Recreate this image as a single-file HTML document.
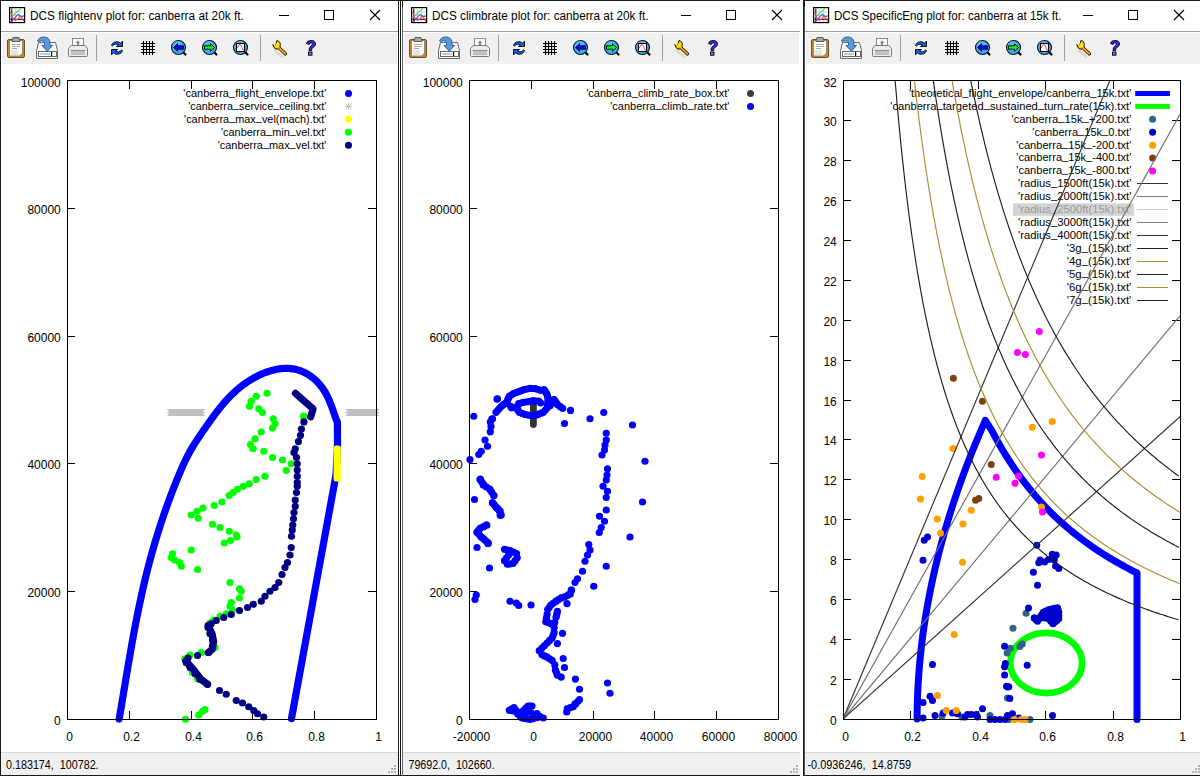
<!DOCTYPE html><html><head><meta charset="utf-8"><style>
html,body{margin:0;padding:0;background:#fff;width:1200px;height:776px;overflow:hidden;position:relative;font-family:"Liberation Sans",sans-serif;}
.a{position:absolute;}
.tt{position:absolute;top:8px;font-size:12px;color:#000;white-space:nowrap;line-height:15px;}
.st{position:absolute;top:757px;font-size:12px;color:#000;white-space:nowrap;line-height:15px;}
svg{position:absolute;left:0;top:0;}

</style></head><body>
<div class="a" style="left:2px;top:33px;width:395px;height:31px;background:#f0f0f0"></div>
<div class="a" style="left:1px;top:31px;width:397px;height:1px;background:#a0a0a0"></div>
<div class="a" style="left:1px;top:752px;width:397px;height:1px;background:#d7d7d7"></div>
<div class="a" style="left:1px;top:753px;width:397px;height:22px;background:#f0f0f0"></div>
<div class="a" style="left:404px;top:33px;width:395px;height:31px;background:#f0f0f0"></div>
<div class="a" style="left:403px;top:31px;width:397px;height:1px;background:#a0a0a0"></div>
<div class="a" style="left:403px;top:752px;width:397px;height:1px;background:#d7d7d7"></div>
<div class="a" style="left:403px;top:753px;width:397px;height:22px;background:#f0f0f0"></div>
<div class="a" style="left:806px;top:33px;width:400px;height:31px;background:#f0f0f0"></div>
<div class="a" style="left:805px;top:31px;width:400px;height:1px;background:#a0a0a0"></div>
<div class="a" style="left:805px;top:752px;width:400px;height:1px;background:#d7d7d7"></div>
<div class="a" style="left:805px;top:753px;width:400px;height:22px;background:#f0f0f0"></div>
<div class="a" style="left:0px;top:0px;width:800px;height:1px;background:#1a1a1a"></div>
<div class="a" style="left:803px;top:0px;width:397px;height:1px;background:#1a1a1a"></div>
<div class="a" style="left:0px;top:775px;width:800px;height:1px;background:#1a1a1a"></div>
<div class="a" style="left:803px;top:775px;width:397px;height:1px;background:#1a1a1a"></div>
<div class="a" style="left:0px;top:0px;width:1px;height:776px;background:#1a1a1a"></div>
<div class="a" style="left:398px;top:0px;width:1px;height:776px;background:#1a1a1a"></div>
<div class="a" style="left:400px;top:0px;width:1px;height:776px;background:#1a1a1a"></div>
<div class="a" style="left:402px;top:0px;width:1px;height:7px;background:#1a1a1a"></div>
<div class="a" style="left:402px;top:7px;width:1px;height:769px;background:#646870"></div>
<div class="a" style="left:803px;top:0px;width:1px;height:776px;background:#1a1a1a"></div>
<div class="a" style="left:804px;top:7px;width:1px;height:769px;background:#50555f"></div>
<div class="a" style="left:804px;top:0px;width:1px;height:7px;background:#1a1a1a"></div>
<svg width="1200" height="776" viewBox="0 0 1200 776" style="font-family:'Liberation Sans',sans-serif">
<text x="30.0" y="20" font-size="12" textLength="213.8" lengthAdjust="spacingAndGlyphs">DCS flightenv plot for: canberra at 20k ft.</text>
<text x="6.0" y="769" font-size="12" textLength="92.6" lengthAdjust="spacingAndGlyphs" xml:space="preserve">0.183174,  100782.</text>
<text x="432.0" y="20" font-size="12" textLength="216.5" lengthAdjust="spacingAndGlyphs">DCS climbrate plot for: canberra at 20k ft.</text>
<text x="408.5" y="769" font-size="12" textLength="86.0" lengthAdjust="spacingAndGlyphs" xml:space="preserve">79692.0,  102660.</text>
<text x="834.0" y="20" font-size="12" textLength="227.5" lengthAdjust="spacingAndGlyphs">DCS SpecificEng plot for: canberra at 15k ft.</text>
<text x="807.5" y="769" font-size="12" textLength="103.5" lengthAdjust="spacingAndGlyphs" xml:space="preserve">-0.0936246,  14.8759</text>
<rect x="279" y="15" width="10" height="1" fill="#000"/>
<rect x="324.5" y="10.5" width="9" height="9" fill="none" stroke="#000" stroke-width="1"/>
<path d="M370.0 10 L380.0 20 M380.0 10 L370.0 20" stroke="#000" stroke-width="1.1"/>
<rect x="394" y="765" width="2" height="2" fill="#b4b4b4"/>
<rect x="391" y="768" width="2" height="2" fill="#b4b4b4"/>
<rect x="394" y="768" width="2" height="2" fill="#b4b4b4"/>
<rect x="388" y="771" width="2" height="2" fill="#b4b4b4"/>
<rect x="391" y="771" width="2" height="2" fill="#b4b4b4"/>
<rect x="394" y="771" width="2" height="2" fill="#b4b4b4"/>
<rect x="96" y="35" width="1" height="26" fill="#a0a0a0"/>
<rect x="260" y="35" width="1" height="26" fill="#a0a0a0"/>
<rect x="681" y="15" width="10" height="1" fill="#000"/>
<rect x="726.5" y="10.5" width="9" height="9" fill="none" stroke="#000" stroke-width="1"/>
<path d="M772.0 10 L782.0 20 M782.0 10 L772.0 20" stroke="#000" stroke-width="1.1"/>
<rect x="796" y="765" width="2" height="2" fill="#b4b4b4"/>
<rect x="793" y="768" width="2" height="2" fill="#b4b4b4"/>
<rect x="796" y="768" width="2" height="2" fill="#b4b4b4"/>
<rect x="790" y="771" width="2" height="2" fill="#b4b4b4"/>
<rect x="793" y="771" width="2" height="2" fill="#b4b4b4"/>
<rect x="796" y="771" width="2" height="2" fill="#b4b4b4"/>
<rect x="498" y="35" width="1" height="26" fill="#a0a0a0"/>
<rect x="662" y="35" width="1" height="26" fill="#a0a0a0"/>
<rect x="1083" y="15" width="10" height="1" fill="#000"/>
<rect x="1128.5" y="10.5" width="9" height="9" fill="none" stroke="#000" stroke-width="1"/>
<path d="M1174.0 10 L1184.0 20 M1184.0 10 L1174.0 20" stroke="#000" stroke-width="1.1"/>
<rect x="1198" y="765" width="2" height="2" fill="#b4b4b4"/>
<rect x="1195" y="768" width="2" height="2" fill="#b4b4b4"/>
<rect x="1198" y="768" width="2" height="2" fill="#b4b4b4"/>
<rect x="1192" y="771" width="2" height="2" fill="#b4b4b4"/>
<rect x="1195" y="771" width="2" height="2" fill="#b4b4b4"/>
<rect x="1198" y="771" width="2" height="2" fill="#b4b4b4"/>
<rect x="900" y="35" width="1" height="26" fill="#a0a0a0"/>
<rect x="1064" y="35" width="1" height="26" fill="#a0a0a0"/>
<g transform="translate(0,0)"><rect x="7.5" y="39.5" width="17" height="18" rx="1.5" fill="#c98a2b" stroke="#7a4d12" stroke-width="1"/><path d="M9.5 40.5 H22.5 V53 L19.5 56 H9.5 Z" fill="#fdfdfd" stroke="#707a80" stroke-width="0.8"/><path d="M12 40.5 L13 37.5 H19 L20 40.5 V41.5 H12 Z" fill="#a8a898" stroke="#505050" stroke-width="0.9"/><path d="M12 44.5 H20 M12 46.5 H20 M12 48.5 H17" stroke="#909090" stroke-width="0.8"/><path d="M11 50 H18 V55 H11 Z" fill="#e6e6e0"/><path d="M38.5 42.5 H55.5 L57.5 50.5 V58.5 H36.5 V50.5 Z" fill="#f6f6f6" stroke="#6a6a6a" stroke-width="1"/><rect x="38.5" y="51.5" width="18" height="5" fill="#fff" stroke="#6a6a6a" stroke-width="1"/><rect x="40" y="53" width="10" height="2" fill="#c8c8c8"/><rect x="51" y="52" width="1.2" height="4" fill="#000"/><path d="M37.5 41 C38.5 38 41 37 44 37 C47.5 37 49.5 39 50 42 V45.5 H52.5 L47.4 51.2 L42 45.5 H44.5 V43 C44 41 42 40 39.5 41.5 Z" fill="#5b9bd5" stroke="#1f5a96" stroke-width="0.9"/><rect x="72.5" y="38.5" width="11" height="9" fill="#fafafa" stroke="#8a8a8a" stroke-width="1"/><path d="M78 40.5 L75.5 43 H77 V46 H79 V43 H80.5 Z" fill="#8a8a8a"/><path d="M71 45.5 H85 L87.5 48.5 V55.5 Q87.5 56.5 86.5 56.5 H69.5 Q68.5 56.5 68.5 55.5 V48.5 Z" fill="#ececec" stroke="#7a7a7a" stroke-width="1"/><path d="M70.5 50.5 H85.5 M71 54 H85" stroke="#8a8a8a" stroke-width="1"/><rect x="71" y="51" width="14" height="2.5" fill="#c4c4c4"/><path d="M111.5 45.5 C112.5 41.5 118 40.5 121 43.5 L122.5 41 V46.5 H116.5 L118.5 45 C116.5 43.5 114 44 112.5 46 Z" fill="#1060ff" stroke="#000" stroke-width="0.9"/><path d="M122.5 50.5 C121.5 54.5 116 55.5 113 52.5 L111.5 55 V49.5 H117.5 L115.5 51 C117.5 52.5 120 52 121.5 50 Z" fill="#1060ff" stroke="#000" stroke-width="0.9"/><path d="M143.5 41 V55 M146.5 41 V55 M149.5 41 V55 M152.5 41 V55 M141 43.5 H155 M141 46.5 H155 M141 49.5 H155 M141 52.5 H155" stroke="#000" stroke-width="1.1"/><circle cx="178.5" cy="47.5" r="7" fill="#3aa8f5" stroke="#101010" stroke-width="1.1"/><circle cx="177.5" cy="46.0" r="5" fill="#70c8ff" opacity="0.5"/><path d="M184.0 53.0 L185.5 54.5" stroke="#000" stroke-width="2.2" stroke-linecap="round"/><path d="M173.5 47.5 L177.5 43.8 V45.8 H183.5 V49.2 H177.5 V51.2 Z" fill="#0000ff" stroke="#000" stroke-width="0.9"/><circle cx="209.5" cy="47.5" r="7" fill="#3aa8f5" stroke="#101010" stroke-width="1.1"/><circle cx="208.5" cy="46.0" r="5" fill="#70c8ff" opacity="0.5"/><path d="M215.0 53.0 L216.5 54.5" stroke="#000" stroke-width="2.2" stroke-linecap="round"/><path d="M214.5 47.5 L210.5 43.8 V45.8 H204.5 V49.2 H210.5 V51.2 Z" fill="#00ff00" stroke="#000" stroke-width="0.9"/><circle cx="240.5" cy="47.5" r="7" fill="#3aa8f5" stroke="#101010" stroke-width="1.1"/><circle cx="239.5" cy="46.0" r="5" fill="#70c8ff" opacity="0.5"/><path d="M246.0 53.0 L247.5 54.5" stroke="#000" stroke-width="2.2" stroke-linecap="round"/><rect x="236.5" y="43.5" width="8" height="8" fill="#fff" stroke="#000" stroke-width="1.1"/><path d="M237 48 C238.5 46.5 238.5 44.5 240 44.5 C241.5 44.5 242 50 244 50.5" fill="none" stroke="#ff0000" stroke-width="0.8"/><path d="M274 50 L283 57.5" stroke="#b8b0a0" stroke-width="2.5" opacity="0.35"/><path d="M272.8 44.5 L274.3 46.2 L275.6 45.3 L276.2 43.5 L276.9 40.5 Q280.6 41.5 280.3 44.8 L279.9 47 L286.6 53 Q287.2 55.2 285 55.3 L278.3 49 Q275.8 49.8 274 47.6 Z" fill="#ffa000" stroke="#000" stroke-width="0.9" stroke-linejoin="round"/><path d="M273.6 44.9 L274.4 45.6 L276 44.6 L277.4 41.4 Q279.8 42.4 279.5 44.8 L279.1 46.8 Q276.5 48.6 274.6 47.1 Z" fill="#ffe600"/><path d="M306.5 43.5 Q307 40.5 311 40.5 Q315.5 40.5 315.5 44 Q315.5 46 313 47.5 Q311.5 48.5 311.5 50.5 H309 Q308.8 47.5 311 46 Q312.5 45 312.5 44 Q312.5 42.8 311 42.8 Q309.5 42.8 309.2 44.5 Z" fill="#3030f0" stroke="#000" stroke-width="0.9"/><rect x="308.5" y="52" width="3.5" height="3.2" fill="#7070f8" stroke="#000" stroke-width="0.9"/><rect x="9.6" y="7.6" width="15" height="15" fill="#fff" stroke="#000" stroke-width="1.2"/><path d="M10.5 12 H24 M10.5 15.5 H24 M15.5 8.5 V22 M19.5 8.5 V22" stroke="#cccccc" stroke-width="0.8"/><path d="M11.8 8.5 V22 M10.3 19.3 H24" stroke="#000" stroke-width="1"/><path d="M10.6 17.3 L12 16.5 L21 8.3" fill="none" stroke="#22ee55" stroke-width="1.1"/><path d="M10.8 22 L14 19 L17.3 15 Q18.3 14 19.3 15 L21 16.6 Q22 17 23.8 15.6" fill="none" stroke="#4040ff" stroke-width="1.1"/><path d="M10.4 12 L12.4 16.5 L14 19.5 Q15.7 21 17.5 19 L19 17 Q20 16 21.3 17.5 L23.8 21.4" fill="none" stroke="#ff4444" stroke-width="1.1"/></g>
<g transform="translate(402,0)"><rect x="7.5" y="39.5" width="17" height="18" rx="1.5" fill="#c98a2b" stroke="#7a4d12" stroke-width="1"/><path d="M9.5 40.5 H22.5 V53 L19.5 56 H9.5 Z" fill="#fdfdfd" stroke="#707a80" stroke-width="0.8"/><path d="M12 40.5 L13 37.5 H19 L20 40.5 V41.5 H12 Z" fill="#a8a898" stroke="#505050" stroke-width="0.9"/><path d="M12 44.5 H20 M12 46.5 H20 M12 48.5 H17" stroke="#909090" stroke-width="0.8"/><path d="M11 50 H18 V55 H11 Z" fill="#e6e6e0"/><path d="M38.5 42.5 H55.5 L57.5 50.5 V58.5 H36.5 V50.5 Z" fill="#f6f6f6" stroke="#6a6a6a" stroke-width="1"/><rect x="38.5" y="51.5" width="18" height="5" fill="#fff" stroke="#6a6a6a" stroke-width="1"/><rect x="40" y="53" width="10" height="2" fill="#c8c8c8"/><rect x="51" y="52" width="1.2" height="4" fill="#000"/><path d="M37.5 41 C38.5 38 41 37 44 37 C47.5 37 49.5 39 50 42 V45.5 H52.5 L47.4 51.2 L42 45.5 H44.5 V43 C44 41 42 40 39.5 41.5 Z" fill="#5b9bd5" stroke="#1f5a96" stroke-width="0.9"/><rect x="72.5" y="38.5" width="11" height="9" fill="#fafafa" stroke="#8a8a8a" stroke-width="1"/><path d="M78 40.5 L75.5 43 H77 V46 H79 V43 H80.5 Z" fill="#8a8a8a"/><path d="M71 45.5 H85 L87.5 48.5 V55.5 Q87.5 56.5 86.5 56.5 H69.5 Q68.5 56.5 68.5 55.5 V48.5 Z" fill="#ececec" stroke="#7a7a7a" stroke-width="1"/><path d="M70.5 50.5 H85.5 M71 54 H85" stroke="#8a8a8a" stroke-width="1"/><rect x="71" y="51" width="14" height="2.5" fill="#c4c4c4"/><path d="M111.5 45.5 C112.5 41.5 118 40.5 121 43.5 L122.5 41 V46.5 H116.5 L118.5 45 C116.5 43.5 114 44 112.5 46 Z" fill="#1060ff" stroke="#000" stroke-width="0.9"/><path d="M122.5 50.5 C121.5 54.5 116 55.5 113 52.5 L111.5 55 V49.5 H117.5 L115.5 51 C117.5 52.5 120 52 121.5 50 Z" fill="#1060ff" stroke="#000" stroke-width="0.9"/><path d="M143.5 41 V55 M146.5 41 V55 M149.5 41 V55 M152.5 41 V55 M141 43.5 H155 M141 46.5 H155 M141 49.5 H155 M141 52.5 H155" stroke="#000" stroke-width="1.1"/><circle cx="178.5" cy="47.5" r="7" fill="#3aa8f5" stroke="#101010" stroke-width="1.1"/><circle cx="177.5" cy="46.0" r="5" fill="#70c8ff" opacity="0.5"/><path d="M184.0 53.0 L185.5 54.5" stroke="#000" stroke-width="2.2" stroke-linecap="round"/><path d="M173.5 47.5 L177.5 43.8 V45.8 H183.5 V49.2 H177.5 V51.2 Z" fill="#0000ff" stroke="#000" stroke-width="0.9"/><circle cx="209.5" cy="47.5" r="7" fill="#3aa8f5" stroke="#101010" stroke-width="1.1"/><circle cx="208.5" cy="46.0" r="5" fill="#70c8ff" opacity="0.5"/><path d="M215.0 53.0 L216.5 54.5" stroke="#000" stroke-width="2.2" stroke-linecap="round"/><path d="M214.5 47.5 L210.5 43.8 V45.8 H204.5 V49.2 H210.5 V51.2 Z" fill="#00ff00" stroke="#000" stroke-width="0.9"/><circle cx="240.5" cy="47.5" r="7" fill="#3aa8f5" stroke="#101010" stroke-width="1.1"/><circle cx="239.5" cy="46.0" r="5" fill="#70c8ff" opacity="0.5"/><path d="M246.0 53.0 L247.5 54.5" stroke="#000" stroke-width="2.2" stroke-linecap="round"/><rect x="236.5" y="43.5" width="8" height="8" fill="#fff" stroke="#000" stroke-width="1.1"/><path d="M237 48 C238.5 46.5 238.5 44.5 240 44.5 C241.5 44.5 242 50 244 50.5" fill="none" stroke="#ff0000" stroke-width="0.8"/><path d="M274 50 L283 57.5" stroke="#b8b0a0" stroke-width="2.5" opacity="0.35"/><path d="M272.8 44.5 L274.3 46.2 L275.6 45.3 L276.2 43.5 L276.9 40.5 Q280.6 41.5 280.3 44.8 L279.9 47 L286.6 53 Q287.2 55.2 285 55.3 L278.3 49 Q275.8 49.8 274 47.6 Z" fill="#ffa000" stroke="#000" stroke-width="0.9" stroke-linejoin="round"/><path d="M273.6 44.9 L274.4 45.6 L276 44.6 L277.4 41.4 Q279.8 42.4 279.5 44.8 L279.1 46.8 Q276.5 48.6 274.6 47.1 Z" fill="#ffe600"/><path d="M306.5 43.5 Q307 40.5 311 40.5 Q315.5 40.5 315.5 44 Q315.5 46 313 47.5 Q311.5 48.5 311.5 50.5 H309 Q308.8 47.5 311 46 Q312.5 45 312.5 44 Q312.5 42.8 311 42.8 Q309.5 42.8 309.2 44.5 Z" fill="#3030f0" stroke="#000" stroke-width="0.9"/><rect x="308.5" y="52" width="3.5" height="3.2" fill="#7070f8" stroke="#000" stroke-width="0.9"/><rect x="9.6" y="7.6" width="15" height="15" fill="#fff" stroke="#000" stroke-width="1.2"/><path d="M10.5 12 H24 M10.5 15.5 H24 M15.5 8.5 V22 M19.5 8.5 V22" stroke="#cccccc" stroke-width="0.8"/><path d="M11.8 8.5 V22 M10.3 19.3 H24" stroke="#000" stroke-width="1"/><path d="M10.6 17.3 L12 16.5 L21 8.3" fill="none" stroke="#22ee55" stroke-width="1.1"/><path d="M10.8 22 L14 19 L17.3 15 Q18.3 14 19.3 15 L21 16.6 Q22 17 23.8 15.6" fill="none" stroke="#4040ff" stroke-width="1.1"/><path d="M10.4 12 L12.4 16.5 L14 19.5 Q15.7 21 17.5 19 L19 17 Q20 16 21.3 17.5 L23.8 21.4" fill="none" stroke="#ff4444" stroke-width="1.1"/></g>
<g transform="translate(804,0)"><rect x="7.5" y="39.5" width="17" height="18" rx="1.5" fill="#c98a2b" stroke="#7a4d12" stroke-width="1"/><path d="M9.5 40.5 H22.5 V53 L19.5 56 H9.5 Z" fill="#fdfdfd" stroke="#707a80" stroke-width="0.8"/><path d="M12 40.5 L13 37.5 H19 L20 40.5 V41.5 H12 Z" fill="#a8a898" stroke="#505050" stroke-width="0.9"/><path d="M12 44.5 H20 M12 46.5 H20 M12 48.5 H17" stroke="#909090" stroke-width="0.8"/><path d="M11 50 H18 V55 H11 Z" fill="#e6e6e0"/><path d="M38.5 42.5 H55.5 L57.5 50.5 V58.5 H36.5 V50.5 Z" fill="#f6f6f6" stroke="#6a6a6a" stroke-width="1"/><rect x="38.5" y="51.5" width="18" height="5" fill="#fff" stroke="#6a6a6a" stroke-width="1"/><rect x="40" y="53" width="10" height="2" fill="#c8c8c8"/><rect x="51" y="52" width="1.2" height="4" fill="#000"/><path d="M37.5 41 C38.5 38 41 37 44 37 C47.5 37 49.5 39 50 42 V45.5 H52.5 L47.4 51.2 L42 45.5 H44.5 V43 C44 41 42 40 39.5 41.5 Z" fill="#5b9bd5" stroke="#1f5a96" stroke-width="0.9"/><rect x="72.5" y="38.5" width="11" height="9" fill="#fafafa" stroke="#8a8a8a" stroke-width="1"/><path d="M78 40.5 L75.5 43 H77 V46 H79 V43 H80.5 Z" fill="#8a8a8a"/><path d="M71 45.5 H85 L87.5 48.5 V55.5 Q87.5 56.5 86.5 56.5 H69.5 Q68.5 56.5 68.5 55.5 V48.5 Z" fill="#ececec" stroke="#7a7a7a" stroke-width="1"/><path d="M70.5 50.5 H85.5 M71 54 H85" stroke="#8a8a8a" stroke-width="1"/><rect x="71" y="51" width="14" height="2.5" fill="#c4c4c4"/><path d="M111.5 45.5 C112.5 41.5 118 40.5 121 43.5 L122.5 41 V46.5 H116.5 L118.5 45 C116.5 43.5 114 44 112.5 46 Z" fill="#1060ff" stroke="#000" stroke-width="0.9"/><path d="M122.5 50.5 C121.5 54.5 116 55.5 113 52.5 L111.5 55 V49.5 H117.5 L115.5 51 C117.5 52.5 120 52 121.5 50 Z" fill="#1060ff" stroke="#000" stroke-width="0.9"/><path d="M143.5 41 V55 M146.5 41 V55 M149.5 41 V55 M152.5 41 V55 M141 43.5 H155 M141 46.5 H155 M141 49.5 H155 M141 52.5 H155" stroke="#000" stroke-width="1.1"/><circle cx="178.5" cy="47.5" r="7" fill="#3aa8f5" stroke="#101010" stroke-width="1.1"/><circle cx="177.5" cy="46.0" r="5" fill="#70c8ff" opacity="0.5"/><path d="M184.0 53.0 L185.5 54.5" stroke="#000" stroke-width="2.2" stroke-linecap="round"/><path d="M173.5 47.5 L177.5 43.8 V45.8 H183.5 V49.2 H177.5 V51.2 Z" fill="#0000ff" stroke="#000" stroke-width="0.9"/><circle cx="209.5" cy="47.5" r="7" fill="#3aa8f5" stroke="#101010" stroke-width="1.1"/><circle cx="208.5" cy="46.0" r="5" fill="#70c8ff" opacity="0.5"/><path d="M215.0 53.0 L216.5 54.5" stroke="#000" stroke-width="2.2" stroke-linecap="round"/><path d="M214.5 47.5 L210.5 43.8 V45.8 H204.5 V49.2 H210.5 V51.2 Z" fill="#00ff00" stroke="#000" stroke-width="0.9"/><circle cx="240.5" cy="47.5" r="7" fill="#3aa8f5" stroke="#101010" stroke-width="1.1"/><circle cx="239.5" cy="46.0" r="5" fill="#70c8ff" opacity="0.5"/><path d="M246.0 53.0 L247.5 54.5" stroke="#000" stroke-width="2.2" stroke-linecap="round"/><rect x="236.5" y="43.5" width="8" height="8" fill="#fff" stroke="#000" stroke-width="1.1"/><path d="M237 48 C238.5 46.5 238.5 44.5 240 44.5 C241.5 44.5 242 50 244 50.5" fill="none" stroke="#ff0000" stroke-width="0.8"/><path d="M274 50 L283 57.5" stroke="#b8b0a0" stroke-width="2.5" opacity="0.35"/><path d="M272.8 44.5 L274.3 46.2 L275.6 45.3 L276.2 43.5 L276.9 40.5 Q280.6 41.5 280.3 44.8 L279.9 47 L286.6 53 Q287.2 55.2 285 55.3 L278.3 49 Q275.8 49.8 274 47.6 Z" fill="#ffa000" stroke="#000" stroke-width="0.9" stroke-linejoin="round"/><path d="M273.6 44.9 L274.4 45.6 L276 44.6 L277.4 41.4 Q279.8 42.4 279.5 44.8 L279.1 46.8 Q276.5 48.6 274.6 47.1 Z" fill="#ffe600"/><path d="M306.5 43.5 Q307 40.5 311 40.5 Q315.5 40.5 315.5 44 Q315.5 46 313 47.5 Q311.5 48.5 311.5 50.5 H309 Q308.8 47.5 311 46 Q312.5 45 312.5 44 Q312.5 42.8 311 42.8 Q309.5 42.8 309.2 44.5 Z" fill="#3030f0" stroke="#000" stroke-width="0.9"/><rect x="308.5" y="52" width="3.5" height="3.2" fill="#7070f8" stroke="#000" stroke-width="0.9"/><rect x="9.6" y="7.6" width="15" height="15" fill="#fff" stroke="#000" stroke-width="1.2"/><path d="M10.5 12 H24 M10.5 15.5 H24 M15.5 8.5 V22 M19.5 8.5 V22" stroke="#cccccc" stroke-width="0.8"/><path d="M11.8 8.5 V22 M10.3 19.3 H24" stroke="#000" stroke-width="1"/><path d="M10.6 17.3 L12 16.5 L21 8.3" fill="none" stroke="#22ee55" stroke-width="1.1"/><path d="M10.8 22 L14 19 L17.3 15 Q18.3 14 19.3 15 L21 16.6 Q22 17 23.8 15.6" fill="none" stroke="#4040ff" stroke-width="1.1"/><path d="M10.4 12 L12.4 16.5 L14 19.5 Q15.7 21 17.5 19 L19 17 Q20 16 21.3 17.5 L23.8 21.4" fill="none" stroke="#ff4444" stroke-width="1.1"/></g>
<path d="M67.5 719 V711 M67.5 81 V89" stroke="#000"/>
<text x="69.5" y="741" font-size="12" text-anchor="middle">0</text>
<path d="M129.5 719 V711 M129.5 81 V89" stroke="#000"/>
<text x="131.5" y="741" font-size="12" text-anchor="middle">0.2</text>
<path d="M191.5 719 V711 M191.5 81 V89" stroke="#000"/>
<text x="193.5" y="741" font-size="12" text-anchor="middle">0.4</text>
<path d="M252.5 719 V711 M252.5 81 V89" stroke="#000"/>
<text x="254.5" y="741" font-size="12" text-anchor="middle">0.6</text>
<path d="M314.5 719 V711 M314.5 81 V89" stroke="#000"/>
<text x="316.5" y="741" font-size="12" text-anchor="middle">0.8</text>
<path d="M376.5 719 V711 M376.5 81 V89" stroke="#000"/>
<text x="378.5" y="741" font-size="12" text-anchor="middle">1</text>
<path d="M67 719.5 H75 M377 719.5 H368" stroke="#000"/>
<text x="60.8" y="724.7" font-size="12" text-anchor="end">0</text>
<path d="M67 591.5 H75 M377 591.5 H368" stroke="#000"/>
<text x="60.8" y="596.7" font-size="12" text-anchor="end">20000</text>
<path d="M67 463.5 H75 M377 463.5 H368" stroke="#000"/>
<text x="60.8" y="468.7" font-size="12" text-anchor="end">40000</text>
<path d="M67 336.5 H75 M377 336.5 H368" stroke="#000"/>
<text x="60.8" y="341.7" font-size="12" text-anchor="end">60000</text>
<path d="M67 208.5 H75 M377 208.5 H368" stroke="#000"/>
<text x="60.8" y="213.7" font-size="12" text-anchor="end">80000</text>
<path d="M67 80.5 H75 M377 80.5 H368" stroke="#000"/>
<text x="60.8" y="86.5" font-size="12" text-anchor="end">100000</text>
<path d="M469.5 719 V711 M469.5 81 V89" stroke="#000"/>
<text x="471.5" y="741" font-size="12" text-anchor="middle">-20000</text>
<path d="M531.5 719 V711 M531.5 81 V89" stroke="#000"/>
<text x="533.5" y="741" font-size="12" text-anchor="middle">0</text>
<path d="M593.5 719 V711 M593.5 81 V89" stroke="#000"/>
<text x="595.5" y="741" font-size="12" text-anchor="middle">20000</text>
<path d="M654.5 719 V711 M654.5 81 V89" stroke="#000"/>
<text x="656.5" y="741" font-size="12" text-anchor="middle">40000</text>
<path d="M716.5 719 V711 M716.5 81 V89" stroke="#000"/>
<text x="718.5" y="741" font-size="12" text-anchor="middle">60000</text>
<path d="M778.5 719 V711 M778.5 81 V89" stroke="#000"/>
<text x="780.5" y="741" font-size="12" text-anchor="middle">80000</text>
<path d="M469 719.5 H477 M779 719.5 H770" stroke="#000"/>
<text x="462.8" y="724.7" font-size="12" text-anchor="end">0</text>
<path d="M469 591.5 H477 M779 591.5 H770" stroke="#000"/>
<text x="462.8" y="596.7" font-size="12" text-anchor="end">20000</text>
<path d="M469 463.5 H477 M779 463.5 H770" stroke="#000"/>
<text x="462.8" y="468.7" font-size="12" text-anchor="end">40000</text>
<path d="M469 336.5 H477 M779 336.5 H770" stroke="#000"/>
<text x="462.8" y="341.7" font-size="12" text-anchor="end">60000</text>
<path d="M469 208.5 H477 M779 208.5 H770" stroke="#000"/>
<text x="462.8" y="213.7" font-size="12" text-anchor="end">80000</text>
<path d="M469 80.5 H477 M779 80.5 H770" stroke="#000"/>
<text x="462.8" y="86.5" font-size="12" text-anchor="end">100000</text>
<path d="M843.5 719 V711 M843.5 81 V89" stroke="#000"/>
<text x="845.5" y="741" font-size="12" text-anchor="middle">0</text>
<path d="M910.5 719 V711 M910.5 81 V89" stroke="#000"/>
<text x="912.5" y="741" font-size="12" text-anchor="middle">0.2</text>
<path d="M978.5 719 V711 M978.5 81 V89" stroke="#000"/>
<text x="980.5" y="741" font-size="12" text-anchor="middle">0.4</text>
<path d="M1045.5 719 V711 M1045.5 81 V89" stroke="#000"/>
<text x="1047.5" y="741" font-size="12" text-anchor="middle">0.6</text>
<path d="M1113.5 719 V711 M1113.5 81 V89" stroke="#000"/>
<text x="1115.5" y="741" font-size="12" text-anchor="middle">0.8</text>
<path d="M1180.5 719 V711 M1180.5 81 V89" stroke="#000"/>
<text x="1182.5" y="741" font-size="12" text-anchor="middle">1</text>
<path d="M843 719.5 H851 M1181 719.5 H1172" stroke="#000"/>
<text x="836.8" y="724.7" font-size="12" text-anchor="end">0</text>
<path d="M843 679.5 H851 M1181 679.5 H1172" stroke="#000"/>
<text x="836.8" y="684.7" font-size="12" text-anchor="end">2</text>
<path d="M843 639.5 H851 M1181 639.5 H1172" stroke="#000"/>
<text x="836.8" y="644.7" font-size="12" text-anchor="end">4</text>
<path d="M843 599.5 H851 M1181 599.5 H1172" stroke="#000"/>
<text x="836.8" y="604.7" font-size="12" text-anchor="end">6</text>
<path d="M843 559.5 H851 M1181 559.5 H1172" stroke="#000"/>
<text x="836.8" y="564.7" font-size="12" text-anchor="end">8</text>
<path d="M843 519.5 H851 M1181 519.5 H1172" stroke="#000"/>
<text x="836.8" y="524.7" font-size="12" text-anchor="end">10</text>
<path d="M843 479.5 H851 M1181 479.5 H1172" stroke="#000"/>
<text x="836.8" y="484.7" font-size="12" text-anchor="end">12</text>
<path d="M843 439.5 H851 M1181 439.5 H1172" stroke="#000"/>
<text x="836.8" y="444.7" font-size="12" text-anchor="end">14</text>
<path d="M843 400.5 H851 M1181 400.5 H1172" stroke="#000"/>
<text x="836.8" y="405.7" font-size="12" text-anchor="end">16</text>
<path d="M843 360.5 H851 M1181 360.5 H1172" stroke="#000"/>
<text x="836.8" y="365.7" font-size="12" text-anchor="end">18</text>
<path d="M843 320.5 H851 M1181 320.5 H1172" stroke="#000"/>
<text x="836.8" y="325.7" font-size="12" text-anchor="end">20</text>
<path d="M843 280.5 H851 M1181 280.5 H1172" stroke="#000"/>
<text x="836.8" y="285.7" font-size="12" text-anchor="end">22</text>
<path d="M843 240.5 H851 M1181 240.5 H1172" stroke="#000"/>
<text x="836.8" y="245.7" font-size="12" text-anchor="end">24</text>
<path d="M843 200.5 H851 M1181 200.5 H1172" stroke="#000"/>
<text x="836.8" y="205.7" font-size="12" text-anchor="end">26</text>
<path d="M843 160.5 H851 M1181 160.5 H1172" stroke="#000"/>
<text x="836.8" y="165.7" font-size="12" text-anchor="end">28</text>
<path d="M843 120.5 H851 M1181 120.5 H1172" stroke="#000"/>
<text x="836.8" y="125.7" font-size="12" text-anchor="end">30</text>
<path d="M843 80.5 H851 M1181 80.5 H1172" stroke="#000"/>
<text x="836.8" y="86.5" font-size="12" text-anchor="end">32</text>
<g><path d="M166.9 409 H205.2 L202.7 411.6 L205.2 412.1 V412.9 L202.7 413.4 L205.2 416 H166.9 L169.4 413.4 L166.9 412.9 V412.1 L169.4 411.6 Z" fill="#c0c0c0"/><path d="M345.2 409 H379.5 L377.0 411.6 L379.5 412.1 V412.9 L377.0 413.4 L379.5 416 H345.2 L347.8 413.4 L345.2 412.9 V412.1 L347.8 411.6 Z" fill="#c0c0c0"/><path d="M119.16 719.01 L119.51 716.99 L119.85 714.96 L120.20 712.93 L120.54 710.90 L120.88 708.87 L121.23 706.84 L121.57 704.81 L121.91 702.78 L122.25 700.75 L122.59 698.72 L122.93 696.69 L123.27 694.66 L123.60 692.63 L123.94 690.60 L124.28 688.57 L124.62 686.54 L124.96 684.51 L125.30 682.48 L125.63 680.45 L125.97 678.42 L126.31 676.40 L126.65 674.37 L126.99 672.34 L127.34 670.31 L127.68 668.28 L128.02 666.26 L128.37 664.23 L128.71 662.20 L129.06 660.18 L129.41 658.15 L129.76 656.13 L130.11 654.10 L130.46 652.08 L130.82 650.05 L131.17 648.03 L131.53 646.00 L131.89 643.98 L132.26 641.96 L132.62 639.94 L132.99 637.92 L133.36 635.90 L133.73 633.88 L134.10 631.86 L134.48 629.84 L134.86 627.82 L135.25 625.80 L135.63 623.78 L136.02 621.77 L136.41 619.75 L136.81 617.74 L137.21 615.72 L137.61 613.71 L138.01 611.70 L138.42 609.69 L138.84 607.67 L139.25 605.66 L139.67 603.65 L140.10 601.65 L140.53 599.64 L140.96 597.63 L141.40 595.62 L141.84 593.62 L142.29 591.62 L142.74 589.61 L143.19 587.61 L143.65 585.61 L144.12 583.61 L144.59 581.61 L145.06 579.61 L145.54 577.61 L146.03 575.62 L146.52 573.62 L147.02 571.63 L147.52 569.64 L148.03 567.64 L148.54 565.65 L149.06 563.66 L149.58 561.68 L150.12 559.69 L150.65 557.70 L151.20 555.72 L151.74 553.74 L152.30 551.76 L152.86 549.78 L153.43 547.80 L154.00 545.82 L154.58 543.84 L155.16 541.87 L155.75 539.90 L156.35 537.93 L156.95 535.96 L157.56 533.99 L158.17 532.03 L158.79 530.06 L159.41 528.10 L160.05 526.14 L160.68 524.18 L161.33 522.23 L161.97 520.28 L162.63 518.33 L163.29 516.38 L163.96 514.43 L164.63 512.49 L165.30 510.54 L165.99 508.60 L166.68 506.67 L167.37 504.73 L168.07 502.80 L168.78 500.87 L169.49 498.94 L170.21 497.02 L170.94 495.10 L171.67 493.18 L172.40 491.26 L173.14 489.35 L173.89 487.43 L174.64 485.53 L175.40 483.62 L176.17 481.72 L176.94 479.82 L177.72 477.92 L178.50 476.03 L179.28 474.14 L180.08 472.25 L180.88 470.37 L181.69 468.49 L182.51 466.62 L183.35 464.76 L184.20 462.90 L185.07 461.04 L185.95 459.20 L186.86 457.36 L187.78 455.54 L188.73 453.72 L189.71 451.92 L190.72 450.13 L191.75 448.35 L192.80 446.58 L193.88 444.82 L194.98 443.07 L196.10 441.33 L197.23 439.60 L198.38 437.88 L199.53 436.16 L200.70 434.46 L201.88 432.76 L203.05 431.06 L204.24 429.38 L205.42 427.69 L206.60 426.02 L207.78 424.35 L208.96 422.68 L210.14 421.02 L211.32 419.37 L212.51 417.73 L213.70 416.09 L214.90 414.47 L216.12 412.85 L217.34 411.25 L218.57 409.66 L219.81 408.08 L221.07 406.52 L222.35 404.97 L223.64 403.44 L224.96 401.92 L226.29 400.42 L227.65 398.93 L229.02 397.47 L230.43 396.02 L231.85 394.59 L233.31 393.19 L234.80 391.80 L236.31 390.44 L237.86 389.10 L239.44 387.78 L241.05 386.49 L242.70 385.22 L244.39 383.98 L246.12 382.77 L247.88 381.58 L249.67 380.43 L251.49 379.32 L253.34 378.24 L255.22 377.20 L257.12 376.21 L259.04 375.26 L260.98 374.37 L262.93 373.52 L264.91 372.73 L266.89 372.00 L268.88 371.32 L270.88 370.71 L272.89 370.16 L274.90 369.68 L276.92 369.27 L278.93 368.93 L280.94 368.67 L282.94 368.48 L284.94 368.38 L286.92 368.36 L288.90 368.42 L290.86 368.58 L292.80 368.82 L294.73 369.16 L296.63 369.60 L298.52 370.13 L300.37 370.76 L302.20 371.48 L304.00 372.28 L305.76 373.17 L307.49 374.15 L309.19 375.21 L310.84 376.34 L312.45 377.55 L314.02 378.83 L315.54 380.18 L317.01 381.60 L318.42 383.09 L319.79 384.63 L321.09 386.24 L322.34 387.90 L323.53 389.61 L324.65 391.38 L325.71 393.19 L326.71 395.05 L327.66 396.94 L328.55 398.86 L329.41 400.80 L330.22 402.76 L330.99 404.73 L331.74 406.71 L332.46 408.69 L333.15 410.66 L333.83 412.62 L334.49 414.57 L335.15 416.49 L335.81 418.38 L336.46 420.23 L337.40 422.00 L337.50 445.00 L336.00 475.00 L291.50 718.50" fill="none" stroke="#0000ff" stroke-width="7.2" stroke-linecap="round" stroke-linejoin="round"/><rect x="333.6" y="445.5" width="7.2" height="36" rx="2.5" fill="#ffff00"/><circle cx="267.00" cy="393.25" r="3.60" fill="#00ff00"/><circle cx="256.25" cy="396.25" r="3.60" fill="#00ff00"/><circle cx="251.25" cy="401.25" r="3.60" fill="#00ff00"/><circle cx="249.50" cy="406.25" r="3.60" fill="#00ff00"/><circle cx="258.75" cy="408.75" r="3.60" fill="#00ff00"/><circle cx="262.50" cy="412.50" r="3.60" fill="#00ff00"/><circle cx="273.25" cy="418.75" r="3.60" fill="#00ff00"/><circle cx="275.00" cy="423.75" r="3.60" fill="#00ff00"/><circle cx="272.50" cy="428.00" r="3.60" fill="#00ff00"/><circle cx="261.25" cy="432.00" r="3.60" fill="#00ff00"/><circle cx="255.00" cy="438.75" r="3.60" fill="#00ff00"/><circle cx="250.50" cy="444.50" r="3.60" fill="#00ff00"/><circle cx="253.00" cy="448.75" r="3.60" fill="#00ff00"/><circle cx="263.75" cy="451.25" r="3.60" fill="#00ff00"/><circle cx="272.50" cy="457.50" r="3.60" fill="#00ff00"/><circle cx="282.50" cy="460.00" r="3.60" fill="#00ff00"/><circle cx="291.25" cy="463.75" r="3.60" fill="#00ff00"/><circle cx="286.25" cy="470.50" r="3.60" fill="#00ff00"/><circle cx="265.00" cy="476.25" r="3.60" fill="#00ff00"/><circle cx="256.25" cy="479.50" r="3.60" fill="#00ff00"/><circle cx="249.25" cy="483.75" r="3.60" fill="#00ff00"/><circle cx="243.25" cy="486.25" r="3.60" fill="#00ff00"/><circle cx="237.50" cy="489.25" r="3.60" fill="#00ff00"/><circle cx="233.25" cy="492.50" r="3.60" fill="#00ff00"/><circle cx="229.25" cy="495.50" r="3.60" fill="#00ff00"/><circle cx="222.00" cy="502.00" r="3.60" fill="#00ff00"/><circle cx="214.25" cy="505.50" r="3.60" fill="#00ff00"/><circle cx="203.00" cy="508.00" r="3.60" fill="#00ff00"/><circle cx="197.00" cy="511.25" r="3.60" fill="#00ff00"/><circle cx="191.25" cy="515.00" r="3.60" fill="#00ff00"/><circle cx="198.25" cy="518.25" r="3.60" fill="#00ff00"/><circle cx="212.50" cy="524.25" r="3.60" fill="#00ff00"/><circle cx="220.00" cy="527.50" r="3.60" fill="#00ff00"/><circle cx="229.25" cy="531.25" r="3.60" fill="#00ff00"/><circle cx="236.25" cy="535.00" r="3.60" fill="#00ff00"/><circle cx="237.00" cy="537.00" r="3.60" fill="#00ff00"/><circle cx="230.50" cy="540.50" r="3.60" fill="#00ff00"/><circle cx="224.25" cy="543.00" r="3.60" fill="#00ff00"/><circle cx="303.50" cy="416.20" r="3.60" fill="#00ff00"/><circle cx="172.50" cy="553.75" r="3.60" fill="#00ff00"/><circle cx="171.25" cy="557.50" r="3.60" fill="#00ff00"/><circle cx="174.50" cy="560.00" r="3.60" fill="#00ff00"/><circle cx="179.50" cy="562.50" r="3.60" fill="#00ff00"/><circle cx="181.25" cy="566.25" r="3.60" fill="#00ff00"/><circle cx="191.25" cy="550.00" r="3.60" fill="#00ff00"/><circle cx="197.50" cy="569.50" r="3.60" fill="#00ff00"/><circle cx="230.00" cy="582.50" r="3.60" fill="#00ff00"/><circle cx="239.50" cy="588.75" r="3.60" fill="#00ff00"/><circle cx="241.25" cy="591.25" r="3.60" fill="#00ff00"/><circle cx="239.50" cy="598.00" r="3.60" fill="#00ff00"/><circle cx="231.25" cy="602.50" r="3.60" fill="#00ff00"/><circle cx="230.00" cy="606.25" r="3.60" fill="#00ff00"/><circle cx="232.50" cy="610.00" r="3.60" fill="#00ff00"/><circle cx="226.25" cy="613.75" r="3.60" fill="#00ff00"/><circle cx="220.00" cy="616.25" r="3.60" fill="#00ff00"/><circle cx="213.75" cy="620.00" r="3.60" fill="#00ff00"/><circle cx="210.00" cy="623.00" r="3.60" fill="#00ff00"/><circle cx="210.00" cy="632.50" r="3.60" fill="#00ff00"/><circle cx="215.00" cy="647.50" r="3.60" fill="#00ff00"/><circle cx="201.25" cy="652.50" r="3.60" fill="#00ff00"/><circle cx="190.00" cy="655.00" r="3.60" fill="#00ff00"/><circle cx="185.00" cy="658.75" r="3.60" fill="#00ff00"/><circle cx="186.25" cy="662.50" r="3.60" fill="#00ff00"/><circle cx="192.50" cy="672.50" r="3.60" fill="#00ff00"/><circle cx="197.50" cy="678.75" r="3.60" fill="#00ff00"/><circle cx="185.50" cy="719.25" r="3.60" fill="#00ff00"/><circle cx="198.75" cy="715.00" r="3.60" fill="#00ff00"/><circle cx="202.50" cy="711.25" r="3.60" fill="#00ff00"/><circle cx="205.00" cy="709.50" r="3.60" fill="#00ff00"/><polyline points="295.50,393.40 313.10,408.90 310.60,416.90" fill="none" stroke="#000080" stroke-width="7.2" stroke-linecap="round" stroke-linejoin="round"/><circle cx="303.90" cy="421.90" r="3.60" fill="#000080"/><circle cx="301.40" cy="429.00" r="3.60" fill="#000080"/><circle cx="300.50" cy="435.30" r="3.60" fill="#000080"/><circle cx="298.40" cy="441.60" r="3.60" fill="#000080"/><circle cx="295.25" cy="448.75" r="3.60" fill="#000080"/><circle cx="294.00" cy="452.50" r="3.60" fill="#000080"/><circle cx="296.50" cy="457.50" r="3.60" fill="#000080"/><circle cx="297.25" cy="463.75" r="3.60" fill="#000080"/><circle cx="297.25" cy="470.00" r="3.60" fill="#000080"/><circle cx="297.25" cy="476.25" r="3.60" fill="#000080"/><circle cx="297.25" cy="482.50" r="3.60" fill="#000080"/><circle cx="297.25" cy="486.25" r="3.60" fill="#000080"/><circle cx="296.50" cy="492.50" r="3.60" fill="#000080"/><circle cx="295.25" cy="500.00" r="3.60" fill="#000080"/><circle cx="295.25" cy="506.25" r="3.60" fill="#000080"/><circle cx="294.00" cy="512.50" r="3.60" fill="#000080"/><circle cx="293.50" cy="518.75" r="3.60" fill="#000080"/><circle cx="292.75" cy="525.00" r="3.60" fill="#000080"/><circle cx="292.25" cy="530.00" r="3.60" fill="#000080"/><circle cx="291.50" cy="536.25" r="3.60" fill="#000080"/><circle cx="291.25" cy="547.50" r="3.60" fill="#000080"/><circle cx="290.00" cy="555.00" r="3.60" fill="#000080"/><circle cx="287.50" cy="562.50" r="3.60" fill="#000080"/><circle cx="285.00" cy="567.50" r="3.60" fill="#000080"/><circle cx="282.00" cy="574.50" r="3.60" fill="#000080"/><circle cx="278.75" cy="582.50" r="3.60" fill="#000080"/><circle cx="275.00" cy="587.50" r="3.60" fill="#000080"/><circle cx="270.00" cy="591.25" r="3.60" fill="#000080"/><circle cx="265.00" cy="596.25" r="3.60" fill="#000080"/><circle cx="261.25" cy="601.25" r="3.60" fill="#000080"/><circle cx="253.25" cy="604.25" r="3.60" fill="#000080"/><circle cx="247.50" cy="607.50" r="3.60" fill="#000080"/><circle cx="239.50" cy="610.50" r="3.60" fill="#000080"/><circle cx="231.25" cy="614.50" r="3.60" fill="#000080"/><circle cx="223.75" cy="617.50" r="3.60" fill="#000080"/><circle cx="216.25" cy="620.50" r="3.60" fill="#000080"/><circle cx="211.25" cy="623.75" r="3.60" fill="#000080"/><circle cx="208.00" cy="627.50" r="3.60" fill="#000080"/><circle cx="210.00" cy="633.75" r="3.60" fill="#000080"/><circle cx="212.50" cy="640.00" r="3.60" fill="#000080"/><circle cx="212.50" cy="646.25" r="3.60" fill="#000080"/><circle cx="208.75" cy="652.50" r="3.60" fill="#000080"/><circle cx="197.50" cy="655.50" r="3.60" fill="#000080"/><circle cx="188.00" cy="658.00" r="3.60" fill="#000080"/><circle cx="186.25" cy="662.50" r="3.60" fill="#000080"/><circle cx="190.00" cy="667.50" r="3.60" fill="#000080"/><circle cx="195.00" cy="673.75" r="3.60" fill="#000080"/><circle cx="200.00" cy="679.50" r="3.60" fill="#000080"/><circle cx="207.50" cy="684.50" r="3.60" fill="#000080"/><circle cx="219.50" cy="690.50" r="3.60" fill="#000080"/><circle cx="226.25" cy="694.25" r="3.60" fill="#000080"/><circle cx="236.25" cy="700.50" r="3.60" fill="#000080"/><circle cx="242.50" cy="703.00" r="3.60" fill="#000080"/><circle cx="248.75" cy="706.75" r="3.60" fill="#000080"/><circle cx="253.75" cy="710.50" r="3.60" fill="#000080"/><circle cx="257.50" cy="713.75" r="3.60" fill="#000080"/><circle cx="263.75" cy="717.00" r="3.60" fill="#000080"/><polyline points="208.20,625.50 212.10,634.00 213.60,641.70 212.10,649.50 208.20,652.50" fill="none" stroke="#000080" stroke-width="7.2" stroke-linecap="round" stroke-linejoin="round"/><polyline points="185.80,661.00 193.50,669.60 201.30,679.60 207.50,684.20" fill="none" stroke="#000080" stroke-width="7.2" stroke-linecap="round" stroke-linejoin="round"/><text x="326.3" y="96.8" font-size="11.5" text-anchor="end" fill="#000" textLength="143.0" lengthAdjust="spacingAndGlyphs">'canberra<tspan dy="-1.3">_</tspan><tspan dy="1.3">flight</tspan><tspan dy="-1.3">_</tspan><tspan dy="1.3">envelope.txt'</tspan></text><circle cx="348.5" cy="93.5" r="3.5" fill="#0000ff"/><text x="326.3" y="109.7" font-size="11.5" text-anchor="end" fill="#000" textLength="138.0" lengthAdjust="spacingAndGlyphs">'canberra<tspan dy="-1.3">_</tspan><tspan dy="1.3">service</tspan><tspan dy="-1.3">_</tspan><tspan dy="1.3">ceiling.txt'</tspan></text><path d="M345.0 106.4 h7 M348.5 102.9 v7 M345.5 103.4 l6 6 M351.5 103.4 l-6 6" stroke="#c0c0c0" stroke-width="1"/><text x="326.3" y="122.6" font-size="11.5" text-anchor="end" fill="#000" textLength="142.2" lengthAdjust="spacingAndGlyphs">'canberra<tspan dy="-1.3">_</tspan><tspan dy="1.3">max</tspan><tspan dy="-1.3">_</tspan><tspan dy="1.3">vel(mach).txt'</tspan></text><circle cx="348.5" cy="119.3" r="3.5" fill="#ffff00"/><text x="326.3" y="135.6" font-size="11.5" text-anchor="end" fill="#000" textLength="105.3" lengthAdjust="spacingAndGlyphs">'canberra<tspan dy="-1.3">_</tspan><tspan dy="1.3">min</tspan><tspan dy="-1.3">_</tspan><tspan dy="1.3">vel.txt'</tspan></text><circle cx="348.5" cy="132.3" r="3.5" fill="#00ff00"/><text x="326.3" y="148.5" font-size="11.5" text-anchor="end" fill="#000" textLength="108.6" lengthAdjust="spacingAndGlyphs">'canberra<tspan dy="-1.3">_</tspan><tspan dy="1.3">max</tspan><tspan dy="-1.3">_</tspan><tspan dy="1.3">vel.txt'</tspan></text><circle cx="348.5" cy="145.2" r="3.5" fill="#000080"/></g><g><line x1="533.4" y1="400.5" x2="533.4" y2="424.5" stroke="#333333" stroke-width="6.8" stroke-linecap="round"/><circle cx="496.00" cy="412.30" r="3.60" fill="#0000ff"/><circle cx="497.77" cy="410.30" r="3.60" fill="#0000ff"/><circle cx="499.53" cy="408.30" r="3.60" fill="#0000ff"/><circle cx="501.30" cy="406.30" r="3.60" fill="#0000ff"/><circle cx="503.10" cy="404.97" r="3.60" fill="#0000ff"/><circle cx="504.90" cy="403.63" r="3.60" fill="#0000ff"/><circle cx="506.70" cy="402.30" r="3.60" fill="#0000ff"/><circle cx="507.57" cy="400.30" r="3.60" fill="#0000ff"/><circle cx="508.43" cy="398.30" r="3.60" fill="#0000ff"/><circle cx="509.30" cy="396.30" r="3.60" fill="#0000ff"/><circle cx="511.30" cy="395.00" r="3.60" fill="#0000ff"/><circle cx="513.30" cy="393.70" r="3.60" fill="#0000ff"/><circle cx="516.00" cy="392.70" r="3.60" fill="#0000ff"/><circle cx="518.70" cy="391.70" r="3.60" fill="#0000ff"/><circle cx="521.35" cy="390.70" r="3.60" fill="#0000ff"/><circle cx="524.00" cy="389.70" r="3.60" fill="#0000ff"/><circle cx="527.00" cy="389.00" r="3.60" fill="#0000ff"/><circle cx="530.00" cy="388.30" r="3.60" fill="#0000ff"/><circle cx="532.65" cy="388.50" r="3.60" fill="#0000ff"/><circle cx="535.30" cy="388.70" r="3.60" fill="#0000ff"/><circle cx="538.00" cy="389.50" r="3.60" fill="#0000ff"/><circle cx="540.70" cy="390.30" r="3.60" fill="#0000ff"/><circle cx="544.00" cy="389.70" r="3.60" fill="#0000ff"/><circle cx="545.35" cy="391.70" r="3.60" fill="#0000ff"/><circle cx="546.70" cy="393.70" r="3.60" fill="#0000ff"/><circle cx="547.35" cy="395.70" r="3.60" fill="#0000ff"/><circle cx="548.00" cy="397.70" r="3.60" fill="#0000ff"/><circle cx="548.00" cy="400.35" r="3.60" fill="#0000ff"/><circle cx="548.00" cy="403.00" r="3.60" fill="#0000ff"/><circle cx="547.65" cy="405.35" r="3.60" fill="#0000ff"/><circle cx="547.30" cy="407.70" r="3.60" fill="#0000ff"/><circle cx="545.30" cy="410.00" r="3.60" fill="#0000ff"/><circle cx="543.30" cy="412.30" r="3.60" fill="#0000ff"/><circle cx="541.10" cy="413.20" r="3.60" fill="#0000ff"/><circle cx="538.90" cy="414.10" r="3.60" fill="#0000ff"/><circle cx="536.70" cy="415.00" r="3.60" fill="#0000ff"/><circle cx="534.00" cy="415.35" r="3.60" fill="#0000ff"/><circle cx="531.30" cy="415.70" r="3.60" fill="#0000ff"/><circle cx="529.10" cy="415.23" r="3.60" fill="#0000ff"/><circle cx="526.90" cy="414.77" r="3.60" fill="#0000ff"/><circle cx="524.70" cy="414.30" r="3.60" fill="#0000ff"/><circle cx="522.00" cy="413.30" r="3.60" fill="#0000ff"/><circle cx="519.30" cy="412.30" r="3.60" fill="#0000ff"/><circle cx="518.00" cy="410.30" r="3.60" fill="#0000ff"/><circle cx="516.70" cy="408.30" r="3.60" fill="#0000ff"/><circle cx="517.70" cy="406.00" r="3.60" fill="#0000ff"/><circle cx="518.70" cy="403.70" r="3.60" fill="#0000ff"/><circle cx="521.00" cy="403.00" r="3.60" fill="#0000ff"/><circle cx="523.30" cy="402.30" r="3.60" fill="#0000ff"/><circle cx="526.00" cy="402.00" r="3.60" fill="#0000ff"/><circle cx="528.70" cy="401.70" r="3.60" fill="#0000ff"/><circle cx="530.70" cy="401.35" r="3.60" fill="#0000ff"/><circle cx="532.70" cy="401.00" r="3.60" fill="#0000ff"/><circle cx="535.70" cy="401.00" r="3.60" fill="#0000ff"/><circle cx="538.70" cy="401.00" r="3.60" fill="#0000ff"/><circle cx="540.70" cy="403.00" r="3.60" fill="#0000ff"/><circle cx="510.70" cy="406.30" r="3.60" fill="#0000ff"/><circle cx="513.00" cy="407.50" r="3.60" fill="#0000ff"/><circle cx="548.00" cy="403.00" r="3.60" fill="#0000ff"/><circle cx="550.00" cy="405.70" r="3.60" fill="#0000ff"/><circle cx="551.33" cy="403.70" r="3.60" fill="#0000ff"/><circle cx="552.67" cy="401.70" r="3.60" fill="#0000ff"/><circle cx="554.00" cy="399.70" r="3.60" fill="#0000ff"/><circle cx="555.33" cy="401.47" r="3.60" fill="#0000ff"/><circle cx="556.67" cy="403.23" r="3.60" fill="#0000ff"/><circle cx="558.00" cy="405.00" r="3.60" fill="#0000ff"/><circle cx="560.35" cy="406.65" r="3.60" fill="#0000ff"/><circle cx="562.70" cy="408.30" r="3.60" fill="#0000ff"/><circle cx="491.80" cy="419.00" r="3.60" fill="#0000ff"/><circle cx="490.30" cy="422.00" r="3.60" fill="#0000ff"/><circle cx="491.00" cy="426.50" r="3.60" fill="#0000ff"/><circle cx="490.30" cy="431.80" r="3.60" fill="#0000ff"/><circle cx="571.50" cy="590.20" r="3.60" fill="#0000ff"/><circle cx="570.30" cy="594.00" r="3.60" fill="#0000ff"/><circle cx="567.70" cy="595.30" r="3.60" fill="#0000ff"/><circle cx="565.10" cy="596.60" r="3.60" fill="#0000ff"/><circle cx="561.20" cy="597.90" r="3.60" fill="#0000ff"/><circle cx="558.65" cy="599.50" r="3.60" fill="#0000ff"/><circle cx="556.10" cy="601.10" r="3.60" fill="#0000ff"/><circle cx="553.50" cy="603.05" r="3.60" fill="#0000ff"/><circle cx="550.90" cy="605.00" r="3.60" fill="#0000ff"/><circle cx="549.30" cy="607.25" r="3.60" fill="#0000ff"/><circle cx="547.70" cy="609.50" r="3.60" fill="#0000ff"/><circle cx="547.10" cy="614.60" r="3.60" fill="#0000ff"/><circle cx="546.45" cy="618.15" r="3.60" fill="#0000ff"/><circle cx="545.80" cy="621.70" r="3.60" fill="#0000ff"/><circle cx="548.35" cy="622.70" r="3.60" fill="#0000ff"/><circle cx="550.90" cy="623.70" r="3.60" fill="#0000ff"/><circle cx="554.10" cy="627.50" r="3.60" fill="#0000ff"/><circle cx="554.10" cy="632.70" r="3.60" fill="#0000ff"/><circle cx="553.15" cy="635.25" r="3.60" fill="#0000ff"/><circle cx="552.20" cy="637.80" r="3.60" fill="#0000ff"/><circle cx="549.65" cy="640.40" r="3.60" fill="#0000ff"/><circle cx="547.10" cy="643.00" r="3.60" fill="#0000ff"/><circle cx="544.50" cy="645.55" r="3.60" fill="#0000ff"/><circle cx="541.90" cy="648.10" r="3.60" fill="#0000ff"/><circle cx="539.30" cy="650.70" r="3.60" fill="#0000ff"/><circle cx="541.90" cy="654.60" r="3.60" fill="#0000ff"/><circle cx="544.50" cy="655.90" r="3.60" fill="#0000ff"/><circle cx="547.10" cy="657.20" r="3.60" fill="#0000ff"/><circle cx="549.65" cy="658.80" r="3.60" fill="#0000ff"/><circle cx="552.20" cy="660.40" r="3.60" fill="#0000ff"/><circle cx="554.80" cy="664.90" r="3.60" fill="#0000ff"/><circle cx="555.40" cy="670.00" r="3.60" fill="#0000ff"/><circle cx="556.40" cy="672.60" r="3.60" fill="#0000ff"/><circle cx="557.40" cy="675.20" r="3.60" fill="#0000ff"/><circle cx="561.20" cy="677.10" r="3.60" fill="#0000ff"/><circle cx="557.40" cy="611.40" r="3.60" fill="#0000ff"/><circle cx="556.75" cy="614.30" r="3.60" fill="#0000ff"/><circle cx="556.10" cy="617.20" r="3.60" fill="#0000ff"/><circle cx="554.80" cy="622.40" r="3.60" fill="#0000ff"/><circle cx="509.30" cy="710.30" r="3.60" fill="#0000ff"/><circle cx="511.65" cy="709.00" r="3.60" fill="#0000ff"/><circle cx="514.00" cy="707.70" r="3.60" fill="#0000ff"/><circle cx="515.33" cy="709.80" r="3.60" fill="#0000ff"/><circle cx="516.67" cy="711.90" r="3.60" fill="#0000ff"/><circle cx="518.00" cy="714.00" r="3.60" fill="#0000ff"/><circle cx="520.35" cy="712.65" r="3.60" fill="#0000ff"/><circle cx="522.70" cy="711.30" r="3.60" fill="#0000ff"/><circle cx="524.47" cy="709.53" r="3.60" fill="#0000ff"/><circle cx="526.23" cy="707.77" r="3.60" fill="#0000ff"/><circle cx="528.00" cy="706.00" r="3.60" fill="#0000ff"/><circle cx="530.00" cy="706.00" r="3.60" fill="#0000ff"/><circle cx="532.00" cy="706.00" r="3.60" fill="#0000ff"/><circle cx="518.00" cy="714.00" r="3.60" fill="#0000ff"/><circle cx="520.00" cy="716.00" r="3.60" fill="#0000ff"/><circle cx="522.00" cy="718.00" r="3.60" fill="#0000ff"/><circle cx="524.67" cy="718.43" r="3.60" fill="#0000ff"/><circle cx="527.33" cy="718.87" r="3.60" fill="#0000ff"/><circle cx="530.00" cy="719.30" r="3.60" fill="#0000ff"/><circle cx="532.50" cy="718.65" r="3.60" fill="#0000ff"/><circle cx="535.00" cy="718.00" r="3.60" fill="#0000ff"/><circle cx="537.50" cy="717.35" r="3.60" fill="#0000ff"/><circle cx="540.00" cy="716.70" r="3.60" fill="#0000ff"/><circle cx="543.30" cy="718.00" r="3.60" fill="#0000ff"/><circle cx="566.70" cy="712.00" r="3.60" fill="#0000ff"/><circle cx="567.30" cy="708.70" r="3.60" fill="#0000ff"/><circle cx="570.30" cy="707.70" r="3.60" fill="#0000ff"/><circle cx="573.30" cy="706.70" r="3.60" fill="#0000ff"/><circle cx="575.65" cy="704.00" r="3.60" fill="#0000ff"/><circle cx="578.00" cy="701.30" r="3.60" fill="#0000ff"/><circle cx="480.40" cy="479.20" r="3.60" fill="#0000ff"/><circle cx="481.80" cy="482.05" r="3.60" fill="#0000ff"/><circle cx="483.20" cy="484.90" r="3.60" fill="#0000ff"/><circle cx="486.40" cy="487.00" r="3.60" fill="#0000ff"/><circle cx="489.60" cy="489.10" r="3.60" fill="#0000ff"/><circle cx="491.75" cy="492.30" r="3.60" fill="#0000ff"/><circle cx="493.90" cy="495.50" r="3.60" fill="#0000ff"/><circle cx="492.50" cy="502.60" r="3.60" fill="#0000ff"/><circle cx="494.25" cy="504.70" r="3.60" fill="#0000ff"/><circle cx="496.00" cy="506.80" r="3.60" fill="#0000ff"/><circle cx="498.10" cy="508.95" r="3.60" fill="#0000ff"/><circle cx="500.20" cy="511.10" r="3.60" fill="#0000ff"/><circle cx="500.20" cy="515.30" r="3.60" fill="#0000ff"/><circle cx="486.80" cy="525.20" r="3.60" fill="#0000ff"/><circle cx="483.60" cy="526.65" r="3.60" fill="#0000ff"/><circle cx="480.40" cy="528.10" r="3.60" fill="#0000ff"/><circle cx="478.65" cy="530.20" r="3.60" fill="#0000ff"/><circle cx="476.90" cy="532.30" r="3.60" fill="#0000ff"/><circle cx="479.35" cy="534.80" r="3.60" fill="#0000ff"/><circle cx="481.80" cy="537.30" r="3.60" fill="#0000ff"/><circle cx="483.93" cy="539.17" r="3.60" fill="#0000ff"/><circle cx="486.07" cy="541.03" r="3.60" fill="#0000ff"/><circle cx="488.20" cy="542.90" r="3.60" fill="#0000ff"/><circle cx="504.50" cy="549.30" r="3.60" fill="#0000ff"/><circle cx="507.35" cy="550.00" r="3.60" fill="#0000ff"/><circle cx="510.20" cy="550.70" r="3.60" fill="#0000ff"/><circle cx="513.35" cy="552.15" r="3.60" fill="#0000ff"/><circle cx="516.50" cy="553.60" r="3.60" fill="#0000ff"/><circle cx="517.20" cy="557.80" r="3.60" fill="#0000ff"/><circle cx="515.10" cy="560.65" r="3.60" fill="#0000ff"/><circle cx="513.00" cy="563.50" r="3.60" fill="#0000ff"/><circle cx="510.15" cy="563.85" r="3.60" fill="#0000ff"/><circle cx="507.30" cy="564.20" r="3.60" fill="#0000ff"/><circle cx="504.50" cy="560.70" r="3.60" fill="#0000ff"/><circle cx="506.60" cy="557.85" r="3.60" fill="#0000ff"/><circle cx="508.70" cy="555.00" r="3.60" fill="#0000ff"/><circle cx="497.50" cy="398.75" r="3.60" fill="#0000ff"/><circle cx="473.75" cy="416.25" r="3.60" fill="#0000ff"/><circle cx="492.50" cy="418.75" r="3.60" fill="#0000ff"/><circle cx="485.00" cy="440.00" r="3.60" fill="#0000ff"/><circle cx="487.50" cy="446.25" r="3.60" fill="#0000ff"/><circle cx="481.25" cy="451.25" r="3.60" fill="#0000ff"/><circle cx="478.75" cy="454.50" r="3.60" fill="#0000ff"/><circle cx="470.00" cy="459.50" r="3.60" fill="#0000ff"/><circle cx="570.50" cy="410.40" r="3.60" fill="#0000ff"/><circle cx="564.50" cy="423.50" r="3.60" fill="#0000ff"/><circle cx="590.00" cy="418.75" r="3.60" fill="#0000ff"/><circle cx="603.75" cy="412.50" r="3.60" fill="#0000ff"/><circle cx="632.50" cy="425.00" r="3.60" fill="#0000ff"/><circle cx="645.00" cy="461.25" r="3.60" fill="#0000ff"/><circle cx="642.50" cy="502.00" r="3.60" fill="#0000ff"/><circle cx="630.00" cy="537.00" r="3.60" fill="#0000ff"/><circle cx="606.25" cy="566.25" r="3.60" fill="#0000ff"/><circle cx="606.25" cy="433.25" r="3.60" fill="#0000ff"/><circle cx="606.25" cy="440.00" r="3.60" fill="#0000ff"/><circle cx="605.00" cy="445.00" r="3.60" fill="#0000ff"/><circle cx="604.50" cy="450.00" r="3.60" fill="#0000ff"/><circle cx="602.00" cy="455.00" r="3.60" fill="#0000ff"/><circle cx="607.50" cy="468.75" r="3.60" fill="#0000ff"/><circle cx="607.00" cy="475.00" r="3.60" fill="#0000ff"/><circle cx="606.25" cy="480.00" r="3.60" fill="#0000ff"/><circle cx="603.00" cy="486.25" r="3.60" fill="#0000ff"/><circle cx="607.50" cy="491.25" r="3.60" fill="#0000ff"/><circle cx="606.25" cy="497.50" r="3.60" fill="#0000ff"/><circle cx="606.25" cy="510.00" r="3.60" fill="#0000ff"/><circle cx="599.50" cy="516.25" r="3.60" fill="#0000ff"/><circle cx="604.50" cy="521.25" r="3.60" fill="#0000ff"/><circle cx="601.25" cy="527.50" r="3.60" fill="#0000ff"/><circle cx="599.25" cy="532.50" r="3.60" fill="#0000ff"/><circle cx="588.75" cy="544.50" r="3.60" fill="#0000ff"/><circle cx="590.00" cy="550.00" r="3.60" fill="#0000ff"/><circle cx="587.50" cy="555.00" r="3.60" fill="#0000ff"/><circle cx="585.00" cy="561.25" r="3.60" fill="#0000ff"/><circle cx="582.50" cy="571.25" r="3.60" fill="#0000ff"/><circle cx="480.00" cy="479.50" r="3.60" fill="#0000ff"/><circle cx="483.75" cy="484.50" r="3.60" fill="#0000ff"/><circle cx="490.00" cy="489.50" r="3.60" fill="#0000ff"/><circle cx="493.75" cy="495.50" r="3.60" fill="#0000ff"/><circle cx="474.50" cy="499.50" r="3.60" fill="#0000ff"/><circle cx="492.50" cy="503.00" r="3.60" fill="#0000ff"/><circle cx="496.25" cy="507.50" r="3.60" fill="#0000ff"/><circle cx="499.50" cy="511.25" r="3.60" fill="#0000ff"/><circle cx="501.25" cy="515.00" r="3.60" fill="#0000ff"/><circle cx="486.25" cy="525.00" r="3.60" fill="#0000ff"/><circle cx="477.50" cy="532.00" r="3.60" fill="#0000ff"/><circle cx="481.25" cy="537.00" r="3.60" fill="#0000ff"/><circle cx="488.00" cy="543.75" r="3.60" fill="#0000ff"/><circle cx="477.00" cy="547.50" r="3.60" fill="#0000ff"/><circle cx="489.50" cy="568.00" r="3.60" fill="#0000ff"/><circle cx="577.50" cy="578.75" r="3.60" fill="#0000ff"/><circle cx="575.00" cy="582.50" r="3.60" fill="#0000ff"/><circle cx="571.25" cy="590.00" r="3.60" fill="#0000ff"/><circle cx="568.75" cy="594.50" r="3.60" fill="#0000ff"/><circle cx="562.50" cy="597.50" r="3.60" fill="#0000ff"/><circle cx="556.25" cy="601.25" r="3.60" fill="#0000ff"/><circle cx="567.00" cy="603.70" r="3.60" fill="#0000ff"/><circle cx="593.75" cy="586.25" r="3.60" fill="#0000ff"/><circle cx="476.25" cy="595.00" r="3.60" fill="#0000ff"/><circle cx="475.00" cy="599.50" r="3.60" fill="#0000ff"/><circle cx="510.00" cy="601.25" r="3.60" fill="#0000ff"/><circle cx="516.25" cy="603.00" r="3.60" fill="#0000ff"/><circle cx="518.75" cy="605.50" r="3.60" fill="#0000ff"/><circle cx="531.00" cy="605.00" r="3.60" fill="#0000ff"/><circle cx="562.50" cy="633.30" r="3.60" fill="#0000ff"/><circle cx="557.40" cy="643.60" r="3.60" fill="#0000ff"/><circle cx="563.20" cy="658.50" r="3.60" fill="#0000ff"/><circle cx="564.50" cy="667.50" r="3.60" fill="#0000ff"/><circle cx="575.40" cy="679.10" r="3.60" fill="#0000ff"/><circle cx="579.50" cy="689.25" r="3.60" fill="#0000ff"/><circle cx="579.50" cy="699.50" r="3.60" fill="#0000ff"/><circle cx="575.00" cy="703.75" r="3.60" fill="#0000ff"/><circle cx="607.50" cy="683.00" r="3.60" fill="#0000ff"/><circle cx="610.00" cy="693.25" r="3.60" fill="#0000ff"/><circle cx="518.00" cy="712.00" r="3.60" fill="#0000ff"/><circle cx="525.00" cy="713.00" r="3.60" fill="#0000ff"/><circle cx="531.00" cy="712.50" r="3.60" fill="#0000ff"/><circle cx="537.00" cy="713.50" r="3.60" fill="#0000ff"/><circle cx="524.00" cy="716.50" r="3.60" fill="#0000ff"/><circle cx="513.00" cy="711.00" r="3.60" fill="#0000ff"/><circle cx="511.30" cy="407.80" r="3.60" fill="#0000ff"/><circle cx="497.00" cy="399.10" r="3.60" fill="#0000ff"/><text x="729.4" y="96.8" font-size="11.5" text-anchor="end" fill="#000" textLength="143.2" lengthAdjust="spacingAndGlyphs">'canberra<tspan dy="-1.3">_</tspan><tspan dy="1.3">climb</tspan><tspan dy="-1.3">_</tspan><tspan dy="1.3">rate</tspan><tspan dy="-1.3">_</tspan><tspan dy="1.3">box.txt'</tspan></text><circle cx="750.5" cy="93.5" r="3.5" fill="#3a3a3a"/><text x="729.4" y="109.7" font-size="11.5" text-anchor="end" fill="#000" textLength="119.2" lengthAdjust="spacingAndGlyphs">'canberra<tspan dy="-1.3">_</tspan><tspan dy="1.3">climb</tspan><tspan dy="-1.3">_</tspan><tspan dy="1.3">rate.txt'</tspan></text><circle cx="750.5" cy="106.4" r="3.5" fill="#0000ff"/></g><g><path d="M917.10 719.00 L917.14 713.77 L917.21 708.53 L917.33 703.30 L917.49 698.06 L917.70 692.83 L917.95 687.61 L918.24 682.38 L918.58 677.16 L918.96 671.95 L919.38 666.73 L919.84 661.52 L920.35 656.32 L920.89 651.12 L921.48 645.93 L922.11 640.74 L922.78 635.55 L923.49 630.38 L924.24 625.20 L925.03 620.04 L925.86 614.88 L926.73 609.72 L927.63 604.57 L928.58 599.43 L929.56 594.30 L930.58 589.17 L931.64 584.05 L932.73 578.93 L933.86 573.83 L935.03 568.73 L936.24 563.64 L937.48 558.56 L938.75 553.49 L940.06 548.42 L941.41 543.37 L942.79 538.32 L944.20 533.28 L945.65 528.25 L947.13 523.23 L948.65 518.22 L950.19 513.22 L951.78 508.24 L953.39 503.26 L955.03 498.29 L956.71 493.33 L958.42 488.38 L960.15 483.45 L961.92 478.52 L963.72 473.61 L965.55 468.71 L967.41 463.82 L969.30 458.94 L971.22 454.08 L973.17 449.23 L975.14 444.39 L977.14 439.56 L979.18 434.75 L981.23 429.95 L983.32 425.16 L985.30 420.30 L987.00 423.00 L992.00 430.85 L994.90 436.35 L997.80 441.65 L1000.70 446.75 L1003.60 451.66 L1006.50 456.41 L1009.40 460.98 L1012.30 465.40 L1015.20 469.67 L1018.10 473.80 L1021.00 477.80 L1023.90 481.66 L1026.80 485.41 L1029.70 489.04 L1032.60 492.55 L1035.50 495.97 L1038.40 499.28 L1041.30 502.49 L1044.20 505.61 L1047.10 508.64 L1050.00 511.59 L1052.90 514.45 L1055.80 517.24 L1058.70 519.95 L1061.60 522.60 L1064.50 525.17 L1067.40 527.67 L1070.30 530.11 L1073.20 532.49 L1076.10 534.81 L1079.00 537.08 L1081.90 539.28 L1084.80 541.44 L1087.70 543.54 L1090.60 545.60 L1093.50 547.61 L1096.40 549.57 L1099.30 551.48 L1102.20 553.36 L1105.10 555.19 L1108.00 556.98 L1110.90 558.74 L1113.80 560.45 L1116.70 562.13 L1119.60 563.78 L1122.50 565.39 L1125.40 566.97 L1128.30 568.51 L1131.20 570.03 L1134.10 571.51 L1137.00 572.97 L1137.00 719.50" fill="none" stroke="#0000ff" stroke-width="7" stroke-linejoin="round" stroke-linecap="round"/><ellipse cx="1046.2" cy="663" rx="35.9" ry="30.1" fill="none" stroke="#00ff00" stroke-width="6.6"/><circle cx="1026.10" cy="613.20" r="3.50" fill="#336385"/><circle cx="1013.00" cy="628.20" r="3.50" fill="#336385"/><circle cx="1010.30" cy="648.30" r="3.50" fill="#336385"/><circle cx="1007.10" cy="653.00" r="3.50" fill="#336385"/><circle cx="1019.80" cy="646.60" r="3.50" fill="#336385"/><circle cx="1022.30" cy="644.10" r="3.50" fill="#336385"/><circle cx="1007.50" cy="698.10" r="3.50" fill="#336385"/><circle cx="941.90" cy="716.30" r="3.50" fill="#336385"/><circle cx="961.90" cy="716.90" r="3.50" fill="#336385"/><circle cx="990.00" cy="715.60" r="3.50" fill="#336385"/><circle cx="1008.80" cy="719.40" r="3.50" fill="#336385"/><circle cx="1030.00" cy="719.40" r="3.50" fill="#336385"/><circle cx="1034.30" cy="618.00" r="3.50" fill="#0000cc"/><circle cx="1035.90" cy="619.65" r="3.50" fill="#0000cc"/><circle cx="1037.50" cy="621.30" r="3.50" fill="#0000cc"/><circle cx="1038.95" cy="619.05" r="3.50" fill="#0000cc"/><circle cx="1040.40" cy="616.80" r="3.50" fill="#0000cc"/><circle cx="1041.85" cy="614.55" r="3.50" fill="#0000cc"/><circle cx="1043.30" cy="612.30" r="3.50" fill="#0000cc"/><circle cx="1045.90" cy="611.00" r="3.50" fill="#0000cc"/><circle cx="1048.50" cy="609.70" r="3.50" fill="#0000cc"/><circle cx="1051.50" cy="609.03" r="3.50" fill="#0000cc"/><circle cx="1054.50" cy="608.37" r="3.50" fill="#0000cc"/><circle cx="1057.50" cy="607.70" r="3.50" fill="#0000cc"/><circle cx="1058.15" cy="610.00" r="3.50" fill="#0000cc"/><circle cx="1058.80" cy="612.30" r="3.50" fill="#0000cc"/><circle cx="1058.80" cy="615.50" r="3.50" fill="#0000cc"/><circle cx="1058.80" cy="618.70" r="3.50" fill="#0000cc"/><circle cx="1056.87" cy="620.40" r="3.50" fill="#0000cc"/><circle cx="1054.93" cy="622.10" r="3.50" fill="#0000cc"/><circle cx="1053.00" cy="623.80" r="3.50" fill="#0000cc"/><circle cx="1050.75" cy="621.25" r="3.50" fill="#0000cc"/><circle cx="1048.50" cy="618.70" r="3.50" fill="#0000cc"/><circle cx="1045.25" cy="618.05" r="3.50" fill="#0000cc"/><circle cx="1042.00" cy="617.40" r="3.50" fill="#0000cc"/><circle cx="1039.35" cy="618.20" r="3.50" fill="#0000cc"/><circle cx="1036.70" cy="619.00" r="3.50" fill="#0000cc"/><circle cx="1034.30" cy="618.00" r="3.50" fill="#0000cc"/><polygon points="1034.30,618.00 1037.50,621.30 1043.30,612.30 1048.50,609.70 1057.50,607.70 1058.80,612.30 1058.80,618.70 1053.00,623.80 1048.50,618.70 1042.00,617.40 1036.70,619.00" fill="#0000cc"/><circle cx="924.25" cy="540.25" r="3.50" fill="#0000cc"/><circle cx="927.50" cy="537.00" r="3.50" fill="#0000cc"/><circle cx="923.00" cy="560.25" r="3.50" fill="#0000cc"/><circle cx="1036.75" cy="545.25" r="3.50" fill="#0000cc"/><circle cx="1033.40" cy="572.30" r="3.50" fill="#0000cc"/><circle cx="1037.50" cy="585.20" r="3.50" fill="#0000cc"/><circle cx="1040.10" cy="560.10" r="3.50" fill="#0000cc"/><circle cx="1038.80" cy="562.70" r="3.50" fill="#0000cc"/><circle cx="1044.60" cy="562.00" r="3.50" fill="#0000cc"/><circle cx="1048.50" cy="559.50" r="3.50" fill="#0000cc"/><circle cx="1052.30" cy="554.30" r="3.50" fill="#0000cc"/><circle cx="1056.20" cy="555.00" r="3.50" fill="#0000cc"/><circle cx="1054.30" cy="560.10" r="3.50" fill="#0000cc"/><circle cx="1055.60" cy="565.90" r="3.50" fill="#0000cc"/><circle cx="1058.80" cy="568.50" r="3.50" fill="#0000cc"/><circle cx="1028.50" cy="608.10" r="3.50" fill="#0000cc"/><circle cx="932.50" cy="664.40" r="3.50" fill="#0000cc"/><circle cx="1027.20" cy="665.20" r="3.50" fill="#0000cc"/><circle cx="1004.60" cy="646.20" r="3.50" fill="#0000cc"/><circle cx="1005.40" cy="663.50" r="3.50" fill="#0000cc"/><circle cx="1004.60" cy="666.70" r="3.50" fill="#0000cc"/><circle cx="1004.60" cy="675.10" r="3.50" fill="#0000cc"/><circle cx="1006.50" cy="686.30" r="3.50" fill="#0000cc"/><circle cx="1008.80" cy="686.80" r="3.50" fill="#0000cc"/><circle cx="1009.90" cy="698.40" r="3.50" fill="#0000cc"/><circle cx="1007.50" cy="686.90" r="3.50" fill="#0000cc"/><circle cx="923.10" cy="702.50" r="3.50" fill="#0000cc"/><circle cx="930.00" cy="696.30" r="3.50" fill="#0000cc"/><circle cx="932.50" cy="700.60" r="3.50" fill="#0000cc"/><circle cx="923.10" cy="718.10" r="3.50" fill="#0000cc"/><circle cx="935.00" cy="715.60" r="3.50" fill="#0000cc"/><circle cx="943.10" cy="713.10" r="3.50" fill="#0000cc"/><circle cx="952.50" cy="713.10" r="3.50" fill="#0000cc"/><circle cx="957.50" cy="713.80" r="3.50" fill="#0000cc"/><circle cx="965.00" cy="716.90" r="3.50" fill="#0000cc"/><circle cx="967.50" cy="714.40" r="3.50" fill="#0000cc"/><circle cx="971.30" cy="714.40" r="3.50" fill="#0000cc"/><circle cx="976.30" cy="714.40" r="3.50" fill="#0000cc"/><circle cx="977.50" cy="716.90" r="3.50" fill="#0000cc"/><circle cx="982.50" cy="708.80" r="3.50" fill="#0000cc"/><circle cx="990.00" cy="719.40" r="3.50" fill="#0000cc"/><circle cx="995.00" cy="719.40" r="3.50" fill="#0000cc"/><circle cx="1000.00" cy="719.40" r="3.50" fill="#0000cc"/><circle cx="1005.00" cy="719.40" r="3.50" fill="#0000cc"/><circle cx="1007.50" cy="715.60" r="3.50" fill="#0000cc"/><circle cx="1012.50" cy="713.80" r="3.50" fill="#0000cc"/><circle cx="1018.80" cy="718.10" r="3.50" fill="#0000cc"/><circle cx="1052.50" cy="715.60" r="3.50" fill="#0000cc"/><circle cx="1032.25" cy="427.25" r="3.50" fill="#ffa000"/><circle cx="1052.20" cy="421.40" r="3.50" fill="#ffa000"/><circle cx="953.00" cy="448.50" r="3.50" fill="#ffa000"/><circle cx="922.25" cy="476.50" r="3.50" fill="#ffa000"/><circle cx="920.50" cy="499.00" r="3.50" fill="#ffa000"/><circle cx="971.25" cy="510.25" r="3.50" fill="#ffa000"/><circle cx="937.25" cy="519.00" r="3.50" fill="#ffa000"/><circle cx="963.00" cy="524.00" r="3.50" fill="#ffa000"/><circle cx="940.50" cy="533.25" r="3.50" fill="#ffa000"/><circle cx="962.50" cy="562.25" r="3.50" fill="#ffa000"/><circle cx="1041.50" cy="507.00" r="3.50" fill="#ffa000"/><circle cx="954.20" cy="634.40" r="3.50" fill="#ffa000"/><circle cx="937.50" cy="695.60" r="3.50" fill="#ffa000"/><circle cx="946.30" cy="710.60" r="3.50" fill="#ffa000"/><circle cx="956.30" cy="710.60" r="3.50" fill="#ffa000"/><circle cx="1014.40" cy="719.40" r="3.50" fill="#ffa000"/><circle cx="1021.30" cy="719.40" r="3.50" fill="#ffa000"/><circle cx="1025.00" cy="719.40" r="3.50" fill="#ffa000"/><circle cx="982.40" cy="401.30" r="3.50" fill="#80400f"/><circle cx="953.40" cy="378.30" r="3.50" fill="#80400f"/><circle cx="991.25" cy="464.50" r="3.50" fill="#80400f"/><circle cx="975.50" cy="500.25" r="3.50" fill="#80400f"/><circle cx="978.75" cy="498.50" r="3.50" fill="#80400f"/><circle cx="1039.30" cy="331.40" r="3.50" fill="#ff00ff"/><circle cx="1017.40" cy="352.40" r="3.50" fill="#ff00ff"/><circle cx="1025.40" cy="354.40" r="3.50" fill="#ff00ff"/><circle cx="1041.50" cy="455.00" r="3.50" fill="#ff00ff"/><circle cx="996.25" cy="477.25" r="3.50" fill="#ff00ff"/><circle cx="1018.50" cy="476.00" r="3.50" fill="#ff00ff"/><circle cx="1015.00" cy="483.25" r="3.50" fill="#ff00ff"/><circle cx="1042.50" cy="512.00" r="3.50" fill="#ff00ff"/><text x="1131.3" y="96.8" font-size="11.5" text-anchor="end" fill="#000" textLength="222.4" lengthAdjust="spacingAndGlyphs">'theoretical<tspan dy="-1.3">_</tspan><tspan dy="1.3">flight</tspan><tspan dy="-1.3">_</tspan><tspan dy="1.3">envelope/canberra</tspan><tspan dy="-1.3">_</tspan><tspan dy="1.3">15k.txt'</tspan></text><rect x="1135.2" y="91.0" width="34.7" height="5" fill="#0000ff"/><text x="1131.3" y="109.7" font-size="11.5" text-anchor="end" fill="#000" textLength="241.0" lengthAdjust="spacingAndGlyphs">'canberra<tspan dy="-1.3">_</tspan><tspan dy="1.3">targeted</tspan><tspan dy="-1.3">_</tspan><tspan dy="1.3">sustained</tspan><tspan dy="-1.3">_</tspan><tspan dy="1.3">turn</tspan><tspan dy="-1.3">_</tspan><tspan dy="1.3">rate(15k).txt'</tspan></text><rect x="1135.2" y="103.9" width="34.7" height="5" fill="#00ff00"/><text x="1131.3" y="122.6" font-size="11.5" text-anchor="end" fill="#000" textLength="119.7" lengthAdjust="spacingAndGlyphs">'canberra<tspan dy="-1.3">_</tspan><tspan dy="1.3">15k</tspan><tspan dy="-1.3">_</tspan><tspan dy="1.3">+200.txt'</tspan></text><circle cx="1152.6" cy="119.3" r="3.5" fill="#336385"/><text x="1131.3" y="135.6" font-size="11.5" text-anchor="end" fill="#000" textLength="99.0" lengthAdjust="spacingAndGlyphs">'canberra<tspan dy="-1.3">_</tspan><tspan dy="1.3">15k</tspan><tspan dy="-1.3">_</tspan><tspan dy="1.3">0.txt'</tspan></text><circle cx="1152.6" cy="132.3" r="3.5" fill="#0000cc"/><text x="1131.3" y="148.5" font-size="11.5" text-anchor="end" fill="#000" textLength="115.0" lengthAdjust="spacingAndGlyphs">'canberra<tspan dy="-1.3">_</tspan><tspan dy="1.3">15k</tspan><tspan dy="-1.3">_</tspan><tspan dy="1.3">-200.txt'</tspan></text><circle cx="1152.6" cy="145.2" r="3.5" fill="#ffa000"/><text x="1131.3" y="161.4" font-size="11.5" text-anchor="end" fill="#000" textLength="115.0" lengthAdjust="spacingAndGlyphs">'canberra<tspan dy="-1.3">_</tspan><tspan dy="1.3">15k</tspan><tspan dy="-1.3">_</tspan><tspan dy="1.3">-400.txt'</tspan></text><circle cx="1152.6" cy="158.1" r="3.5" fill="#80400f"/><text x="1131.3" y="174.3" font-size="11.5" text-anchor="end" fill="#000" textLength="115.0" lengthAdjust="spacingAndGlyphs">'canberra<tspan dy="-1.3">_</tspan><tspan dy="1.3">15k</tspan><tspan dy="-1.3">_</tspan><tspan dy="1.3">-800.txt'</tspan></text><circle cx="1152.6" cy="171.0" r="3.5" fill="#ff00ff"/><text x="1131.3" y="187.2" font-size="11.5" text-anchor="end" fill="#000" textLength="113.2" lengthAdjust="spacingAndGlyphs">'radius<tspan dy="-1.3">_</tspan><tspan dy="1.3">1500ft(15k).txt'</tspan></text><rect x="1137" y="183" width="31" height="1" fill="#303030"/><text x="1131.3" y="200.2" font-size="11.5" text-anchor="end" fill="#000" textLength="113.2" lengthAdjust="spacingAndGlyphs">'radius<tspan dy="-1.3">_</tspan><tspan dy="1.3">2000ft(15k).txt'</tspan></text><rect x="1137" y="196" width="31" height="1" fill="#808080"/><rect x="1013.0" y="203.3" width="121.2" height="12.5" fill="#d4d4d4"/><text x="1131.3" y="213.1" font-size="11.5" text-anchor="end" fill="#9a9a9a" textLength="113.2" lengthAdjust="spacingAndGlyphs">'radius<tspan dy="-1.3">_</tspan><tspan dy="1.3">2500ft(15k).txt'</tspan></text><rect x="1137" y="209" width="31" height="1" fill="#c8c8c8"/><text x="1131.3" y="226.0" font-size="11.5" text-anchor="end" fill="#000" textLength="113.2" lengthAdjust="spacingAndGlyphs">'radius<tspan dy="-1.3">_</tspan><tspan dy="1.3">3000ft(15k).txt'</tspan></text><rect x="1137" y="222" width="31" height="1" fill="#808080"/><text x="1131.3" y="238.9" font-size="11.5" text-anchor="end" fill="#000" textLength="113.2" lengthAdjust="spacingAndGlyphs">'radius<tspan dy="-1.3">_</tspan><tspan dy="1.3">4000ft(15k).txt'</tspan></text><rect x="1137" y="235" width="31" height="1" fill="#303030"/><text x="1131.3" y="251.8" font-size="11.5" text-anchor="end" fill="#000" textLength="64.5" lengthAdjust="spacingAndGlyphs">'3g<tspan dy="-1.3">_</tspan><tspan dy="1.3">(15k).txt'</tspan></text><rect x="1137" y="248" width="31" height="1" fill="#202020"/><text x="1131.3" y="264.8" font-size="11.5" text-anchor="end" fill="#000" textLength="64.5" lengthAdjust="spacingAndGlyphs">'4g<tspan dy="-1.3">_</tspan><tspan dy="1.3">(15k).txt'</tspan></text><rect x="1137" y="261" width="31" height="1" fill="#b08a30"/><text x="1131.3" y="277.7" font-size="11.5" text-anchor="end" fill="#000" textLength="64.5" lengthAdjust="spacingAndGlyphs">'5g<tspan dy="-1.3">_</tspan><tspan dy="1.3">(15k).txt'</tspan></text><rect x="1137" y="274" width="31" height="1" fill="#202020"/><text x="1131.3" y="290.6" font-size="11.5" text-anchor="end" fill="#000" textLength="64.5" lengthAdjust="spacingAndGlyphs">'6g<tspan dy="-1.3">_</tspan><tspan dy="1.3">(15k).txt'</tspan></text><rect x="1137" y="287" width="31" height="1" fill="#b08a30"/><text x="1131.3" y="303.5" font-size="11.5" text-anchor="end" fill="#000" textLength="64.5" lengthAdjust="spacingAndGlyphs">'7g<tspan dy="-1.3">_</tspan><tspan dy="1.3">(15k).txt'</tspan></text><rect x="1137" y="300" width="31" height="1" fill="#202020"/><defs><clipPath id="c3"><rect x="843" y="80" width="337" height="639"/></clipPath></defs><g clip-path="url(#c3)"><line x1="843.00" y1="719.00" x2="1180.00" y2="-87.23" stroke="#303030" stroke-width="1.15"/><line x1="843.00" y1="719.00" x2="1180.00" y2="114.33" stroke="#707070" stroke-width="1.15"/><line x1="843.00" y1="719.00" x2="1180.00" y2="315.89" stroke="#707070" stroke-width="1.15"/><line x1="843.00" y1="719.00" x2="1180.00" y2="416.66" stroke="#303030" stroke-width="1.15"/><polyline points="892.03,40.06 893.72,62.62 895.40,83.72 897.09,103.52 898.77,122.11 900.46,139.61 902.14,156.12 903.83,171.71 905.51,186.47 907.20,200.44 908.88,213.71 910.57,226.31 912.25,238.29 913.94,249.71 915.62,260.60 917.31,271.00 918.99,280.93 920.68,290.43 922.36,299.53 924.05,308.25 925.73,316.62 927.42,324.65 929.10,332.37 930.79,339.79 932.47,346.93 934.16,353.81 935.84,360.44 937.53,366.83 939.21,372.99 940.90,378.95 942.58,384.70 944.27,390.27 945.95,395.65 947.64,400.85 949.32,405.90 951.01,410.78 952.69,415.51 954.38,420.11 956.06,424.56 957.75,428.88 959.43,433.08 961.12,437.16 962.80,441.13 964.49,444.98 966.17,448.73 967.86,452.38 969.54,455.93 971.23,459.38 972.91,462.75 974.60,466.03 976.28,469.23 977.97,472.35 979.65,475.39 981.34,478.36 983.02,481.25 984.71,484.08 986.39,486.84 988.08,489.54 989.76,492.17 991.45,494.75 993.13,497.26 994.82,499.72 996.50,502.13 998.19,504.48 999.87,506.79 1001.56,509.04 1003.24,511.25 1004.93,513.41 1006.61,515.53 1008.30,517.60 1009.98,519.64 1011.67,521.63 1013.35,523.58 1015.04,525.50 1016.72,527.37 1018.41,529.21 1020.09,531.02 1021.78,532.79 1023.46,534.53 1025.15,536.24 1026.83,537.91 1028.52,539.56 1030.20,541.17 1031.89,542.76 1033.57,544.32 1035.26,545.85 1036.94,547.35 1038.63,548.83 1040.31,550.28 1042.00,551.71 1043.68,553.12 1045.37,554.50 1047.05,555.86 1048.74,557.19 1050.42,558.51 1052.11,559.80 1053.79,561.07 1055.48,562.32 1057.16,563.56 1058.85,564.77 1060.53,565.96 1062.22,567.14 1063.90,568.30 1065.59,569.44 1067.27,570.56 1068.96,571.67 1070.64,572.76 1072.33,573.84 1074.01,574.89 1075.70,575.94 1077.38,576.97 1079.07,577.98 1080.75,578.98 1082.44,579.97 1084.12,580.94 1085.81,581.90 1087.49,582.84 1089.18,583.77 1090.86,584.69 1092.55,585.60 1094.23,586.49 1095.92,587.38 1097.60,588.25 1099.29,589.11 1100.97,589.95 1102.66,590.79 1104.34,591.62 1106.03,592.43 1107.71,593.24 1109.40,594.04 1111.08,594.82 1112.77,595.60 1114.45,596.36 1116.14,597.12 1117.82,597.87 1119.51,598.61 1121.19,599.33 1122.88,600.05 1124.56,600.77 1126.25,601.47 1127.93,602.16 1129.62,602.85 1131.30,603.53 1132.99,604.20 1134.67,604.86 1136.36,605.52 1138.04,606.17 1139.73,606.81 1141.41,607.44 1143.10,608.07 1144.78,608.69 1146.47,609.30 1148.15,609.91 1149.84,610.51 1151.52,611.10 1153.21,611.68 1154.89,612.26 1156.58,612.84 1158.26,613.41 1159.95,613.97 1161.63,614.52 1163.32,615.07 1165.00,615.62 1166.69,616.15 1168.37,616.69 1170.06,617.21 1171.74,617.73 1173.43,618.25 1175.11,618.76 1176.80,619.27 1178.48,619.77" fill="none" stroke="#1e1e1e" stroke-width="1.15"/><polyline points="910.14,40.06 911.83,56.68 913.51,72.51 915.20,87.60 916.88,102.00 918.57,115.76 920.25,128.92 921.94,141.51 923.62,153.58 925.31,165.16 926.99,176.27 928.68,186.94 930.36,197.21 932.05,207.08 933.73,216.59 935.42,225.75 937.10,234.58 938.79,243.10 940.47,251.33 942.16,259.27 943.84,266.96 945.53,274.39 947.21,281.58 948.90,288.54 950.58,295.28 952.27,301.81 953.95,308.15 955.64,314.29 957.32,320.26 959.01,326.05 960.69,331.68 962.38,337.14 964.06,342.46 965.75,347.63 967.43,352.66 969.12,357.55 970.80,362.32 972.49,366.96 974.17,371.48 975.86,375.89 977.54,380.19 979.23,384.38 980.91,388.46 982.60,392.45 984.28,396.35 985.97,400.15 987.65,403.87 989.34,407.49 991.02,411.04 992.71,414.51 994.39,417.90 996.08,421.21 997.76,424.45 999.45,427.62 1001.13,430.73 1002.82,433.77 1004.50,436.75 1006.19,439.66 1007.87,442.51 1009.56,445.31 1011.24,448.05 1012.93,450.74 1014.61,453.37 1016.30,455.96 1017.98,458.49 1019.67,460.97 1021.35,463.41 1023.04,465.80 1024.72,468.15 1026.41,470.46 1028.09,472.72 1029.78,474.94 1031.46,477.12 1033.15,479.27 1034.83,481.37 1036.52,483.44 1038.20,485.47 1039.89,487.47 1041.57,489.44 1043.26,491.37 1044.94,493.27 1046.63,495.14 1048.31,496.97 1050.00,498.78 1051.68,500.56 1053.37,502.31 1055.05,504.03 1056.74,505.73 1058.42,507.39 1060.11,509.04 1061.79,510.65 1063.48,512.25 1065.16,513.81 1066.85,515.36 1068.53,516.88 1070.22,518.38 1071.90,519.86 1073.59,521.31 1075.27,522.74 1076.96,524.16 1078.64,525.55 1080.33,526.92 1082.01,528.28 1083.70,529.61 1085.38,530.93 1087.07,532.23 1088.75,533.51 1090.44,534.77 1092.12,536.02 1093.81,537.25 1095.49,538.46 1097.18,539.66 1098.86,540.84 1100.55,542.00 1102.23,543.16 1103.92,544.29 1105.60,545.41 1107.29,546.52 1108.97,547.61 1110.66,548.69 1112.34,549.76 1114.03,550.81 1115.71,551.85 1117.40,552.87 1119.08,553.89 1120.77,554.89 1122.45,555.88 1124.14,556.86 1125.82,557.82 1127.51,558.78 1129.19,559.72 1130.88,560.65 1132.56,561.57 1134.25,562.48 1135.93,563.39 1137.62,564.28 1139.30,565.15 1140.99,566.02 1142.67,566.89 1144.36,567.74 1146.04,568.58 1147.73,569.41 1149.41,570.23 1151.10,571.04 1152.78,571.85 1154.47,572.65 1156.15,573.43 1157.84,574.21 1159.52,574.98 1161.21,575.75 1162.89,576.50 1164.58,577.25 1166.26,577.99 1167.95,578.72 1169.63,579.44 1171.32,580.16 1173.00,580.87 1174.69,581.57 1176.37,582.26 1178.06,582.95 1179.74,583.63" fill="none" stroke="#b08a30" stroke-width="1.15"/><polyline points="927.93,40.06 929.61,53.27 931.30,65.98 932.98,78.20 934.67,89.98 936.35,101.34 938.04,112.29 939.72,122.86 941.41,133.06 943.09,142.93 944.78,152.47 946.46,161.69 948.15,170.62 949.83,179.27 951.52,187.65 953.20,195.78 954.89,203.66 956.57,211.30 958.26,218.73 959.94,225.93 961.63,232.94 963.31,239.74 965.00,246.36 966.68,252.80 968.37,259.07 970.05,265.17 971.74,271.11 973.42,276.90 975.11,282.53 976.79,288.03 978.48,293.39 980.16,298.62 981.85,303.72 983.53,308.70 985.22,313.56 986.90,318.31 988.59,322.95 990.27,327.48 991.96,331.91 993.64,336.24 995.33,340.47 997.01,344.61 998.70,348.66 1000.38,352.63 1002.07,356.51 1003.75,360.31 1005.44,364.03 1007.12,367.67 1008.81,371.25 1010.49,374.74 1012.18,378.17 1013.86,381.53 1015.55,384.83 1017.23,388.06 1018.92,391.23 1020.60,394.34 1022.29,397.39 1023.97,400.39 1025.66,403.33 1027.34,406.21 1029.03,409.04 1030.71,411.83 1032.40,414.56 1034.08,417.24 1035.77,419.88 1037.45,422.47 1039.14,425.02 1040.82,427.52 1042.51,429.99 1044.19,432.41 1045.88,434.79 1047.56,437.13 1049.25,439.43 1050.93,441.70 1052.62,443.93 1054.30,446.12 1055.99,448.28 1057.67,450.40 1059.36,452.50 1061.04,454.55 1062.73,456.58 1064.41,458.58 1066.10,460.55 1067.78,462.48 1069.47,464.39 1071.15,466.27 1072.84,468.13 1074.52,469.95 1076.21,471.75 1077.89,473.52 1079.58,475.27 1081.26,477.00 1082.95,478.70 1084.63,480.37 1086.32,482.02 1088.00,483.65 1089.69,485.26 1091.37,486.85 1093.06,488.41 1094.74,489.96 1096.43,491.48 1098.11,492.98 1099.80,494.46 1101.48,495.93 1103.17,497.37 1104.85,498.80 1106.54,500.21 1108.22,501.60 1109.91,502.97 1111.59,504.32 1113.28,505.66 1114.96,506.98 1116.65,508.29 1118.33,509.58 1120.02,510.85 1121.70,512.11 1123.39,513.36 1125.07,514.58 1126.76,515.80 1128.44,517.00 1130.13,518.18 1131.81,519.35 1133.50,520.51 1135.18,521.66 1136.87,522.79 1138.55,523.91 1140.24,525.01 1141.92,526.11 1143.61,527.19 1145.29,528.26 1146.98,529.31 1148.66,530.36 1150.35,531.39 1152.03,532.42 1153.72,533.43 1155.40,534.43 1157.09,535.42 1158.77,536.40 1160.46,537.37 1162.14,538.33 1163.83,539.28 1165.51,540.22 1167.20,541.14 1168.88,542.06 1170.57,542.97 1172.25,543.88 1173.94,544.77 1175.62,545.65 1177.31,546.52 1178.99,547.39" fill="none" stroke="#1e1e1e" stroke-width="1.15"/><polyline points="945.56,40.06 947.24,51.04 948.93,61.66 950.61,71.95 952.30,81.93 953.98,91.60 955.67,100.98 957.35,110.09 959.04,118.93 960.72,127.52 962.41,135.87 964.09,143.98 965.78,151.87 967.46,159.55 969.15,167.02 970.83,174.30 972.52,181.39 974.20,188.29 975.89,195.02 977.57,201.58 979.26,207.98 980.94,214.22 982.63,220.31 984.31,226.26 986.00,232.07 987.68,237.74 989.37,243.28 991.05,248.69 992.74,253.98 994.42,259.16 996.11,264.22 997.79,269.17 999.48,274.01 1001.16,278.75 1002.85,283.39 1004.53,287.94 1006.22,292.39 1007.90,296.75 1009.59,301.02 1011.27,305.20 1012.96,309.31 1014.64,313.33 1016.33,317.27 1018.01,321.14 1019.70,324.93 1021.38,328.66 1023.07,332.31 1024.75,335.89 1026.44,339.41 1028.12,342.87 1029.81,346.26 1031.49,349.59 1033.18,352.86 1034.86,356.08 1036.55,359.24 1038.23,362.34 1039.92,365.40 1041.60,368.40 1043.29,371.35 1044.97,374.25 1046.66,377.10 1048.34,379.90 1050.03,382.66 1051.71,385.38 1053.40,388.05 1055.08,390.68 1056.77,393.27 1058.45,395.82 1060.14,398.32 1061.82,400.79 1063.51,403.22 1065.19,405.62 1066.88,407.98 1068.56,410.30 1070.25,412.59 1071.93,414.85 1073.62,417.07 1075.30,419.26 1076.99,421.42 1078.67,423.54 1080.36,425.64 1082.04,427.71 1083.73,429.75 1085.41,431.76 1087.10,433.74 1088.78,435.70 1090.47,437.63 1092.15,439.53 1093.84,441.41 1095.52,443.26 1097.21,445.09 1098.89,446.89 1100.58,448.67 1102.26,450.43 1103.95,452.16 1105.63,453.87 1107.32,455.56 1109.00,457.23 1110.69,458.88 1112.37,460.51 1114.06,462.11 1115.74,463.70 1117.43,465.27 1119.11,466.82 1120.80,468.35 1122.48,469.86 1124.17,471.35 1125.85,472.83 1127.54,474.28 1129.22,475.72 1130.91,477.15 1132.59,478.56 1134.28,479.95 1135.96,481.32 1137.65,482.68 1139.33,484.02 1141.02,485.35 1142.70,486.67 1144.39,487.97 1146.07,489.25 1147.76,490.52 1149.44,491.78 1151.13,493.02 1152.81,494.25 1154.50,495.46 1156.18,496.67 1157.87,497.86 1159.55,499.03 1161.24,500.20 1162.92,501.35 1164.61,502.49 1166.29,503.62 1167.98,504.74 1169.66,505.84 1171.35,506.94 1173.03,508.02 1174.72,509.09 1176.40,510.15 1178.09,511.20 1179.77,512.24" fill="none" stroke="#b08a30" stroke-width="1.15"/><polyline points="963.11,40.06 964.79,49.46 966.48,58.59 968.16,67.48 969.85,76.14 971.53,84.57 973.22,92.78 974.90,100.78 976.59,108.57 978.27,116.18 979.96,123.59 981.64,130.83 983.33,137.89 985.01,144.79 986.70,151.52 988.38,158.10 990.07,164.53 991.75,170.81 993.44,176.95 995.12,182.95 996.81,188.82 998.49,194.57 1000.18,200.19 1001.86,205.69 1003.55,211.08 1005.23,216.36 1006.92,221.52 1008.60,226.59 1010.29,231.55 1011.97,236.41 1013.66,241.17 1015.34,245.84 1017.03,250.42 1018.71,254.92 1020.40,259.33 1022.08,263.65 1023.77,267.90 1025.45,272.06 1027.14,276.15 1028.82,280.17 1030.51,284.11 1032.19,287.98 1033.88,291.79 1035.56,295.53 1037.25,299.20 1038.93,302.81 1040.62,306.36 1042.30,309.85 1043.99,313.28 1045.67,316.65 1047.36,319.97 1049.04,323.23 1050.73,326.44 1052.41,329.60 1054.10,332.71 1055.78,335.77 1057.47,338.78 1059.15,341.74 1060.84,344.66 1062.52,347.54 1064.21,350.37 1065.89,353.15 1067.58,355.90 1069.26,358.60 1070.95,361.27 1072.63,363.89 1074.32,366.48 1076.00,369.03 1077.69,371.54 1079.37,374.02 1081.06,376.46 1082.74,378.87 1084.43,381.24 1086.11,383.58 1087.80,385.89 1089.48,388.17 1091.17,390.41 1092.85,392.63 1094.54,394.82 1096.22,396.97 1097.91,399.10 1099.59,401.20 1101.28,403.28 1102.96,405.32 1104.65,407.34 1106.33,409.34 1108.02,411.30 1109.70,413.25 1111.39,415.17 1113.07,417.06 1114.76,418.94 1116.44,420.79 1118.13,422.61 1119.81,424.42 1121.50,426.20 1123.18,427.96 1124.87,429.70 1126.55,431.42 1128.24,433.12 1129.92,434.80 1131.61,436.46 1133.29,438.10 1134.98,439.72 1136.66,441.32 1138.35,442.90 1140.03,444.47 1141.72,446.02 1143.40,447.55 1145.09,449.06 1146.77,450.56 1148.46,452.04 1150.14,453.51 1151.83,454.95 1153.51,456.39 1155.20,457.80 1156.88,459.21 1158.57,460.59 1160.25,461.97 1161.94,463.32 1163.62,464.67 1165.31,466.00 1166.99,467.31 1168.68,468.62 1170.36,469.90 1172.05,471.18 1173.73,472.44 1175.42,473.69 1177.10,474.93 1178.79,476.15" fill="none" stroke="#1e1e1e" stroke-width="1.15"/></g></g>
<rect x="67.5" y="80.5" width="309" height="639" fill="none" stroke="#000" stroke-width="1"/>
<rect x="469.5" y="80.5" width="309" height="639" fill="none" stroke="#000" stroke-width="1"/>
<rect x="843.5" y="80.5" width="337" height="639" fill="none" stroke="#000" stroke-width="1"/>
</svg>
</body></html>
